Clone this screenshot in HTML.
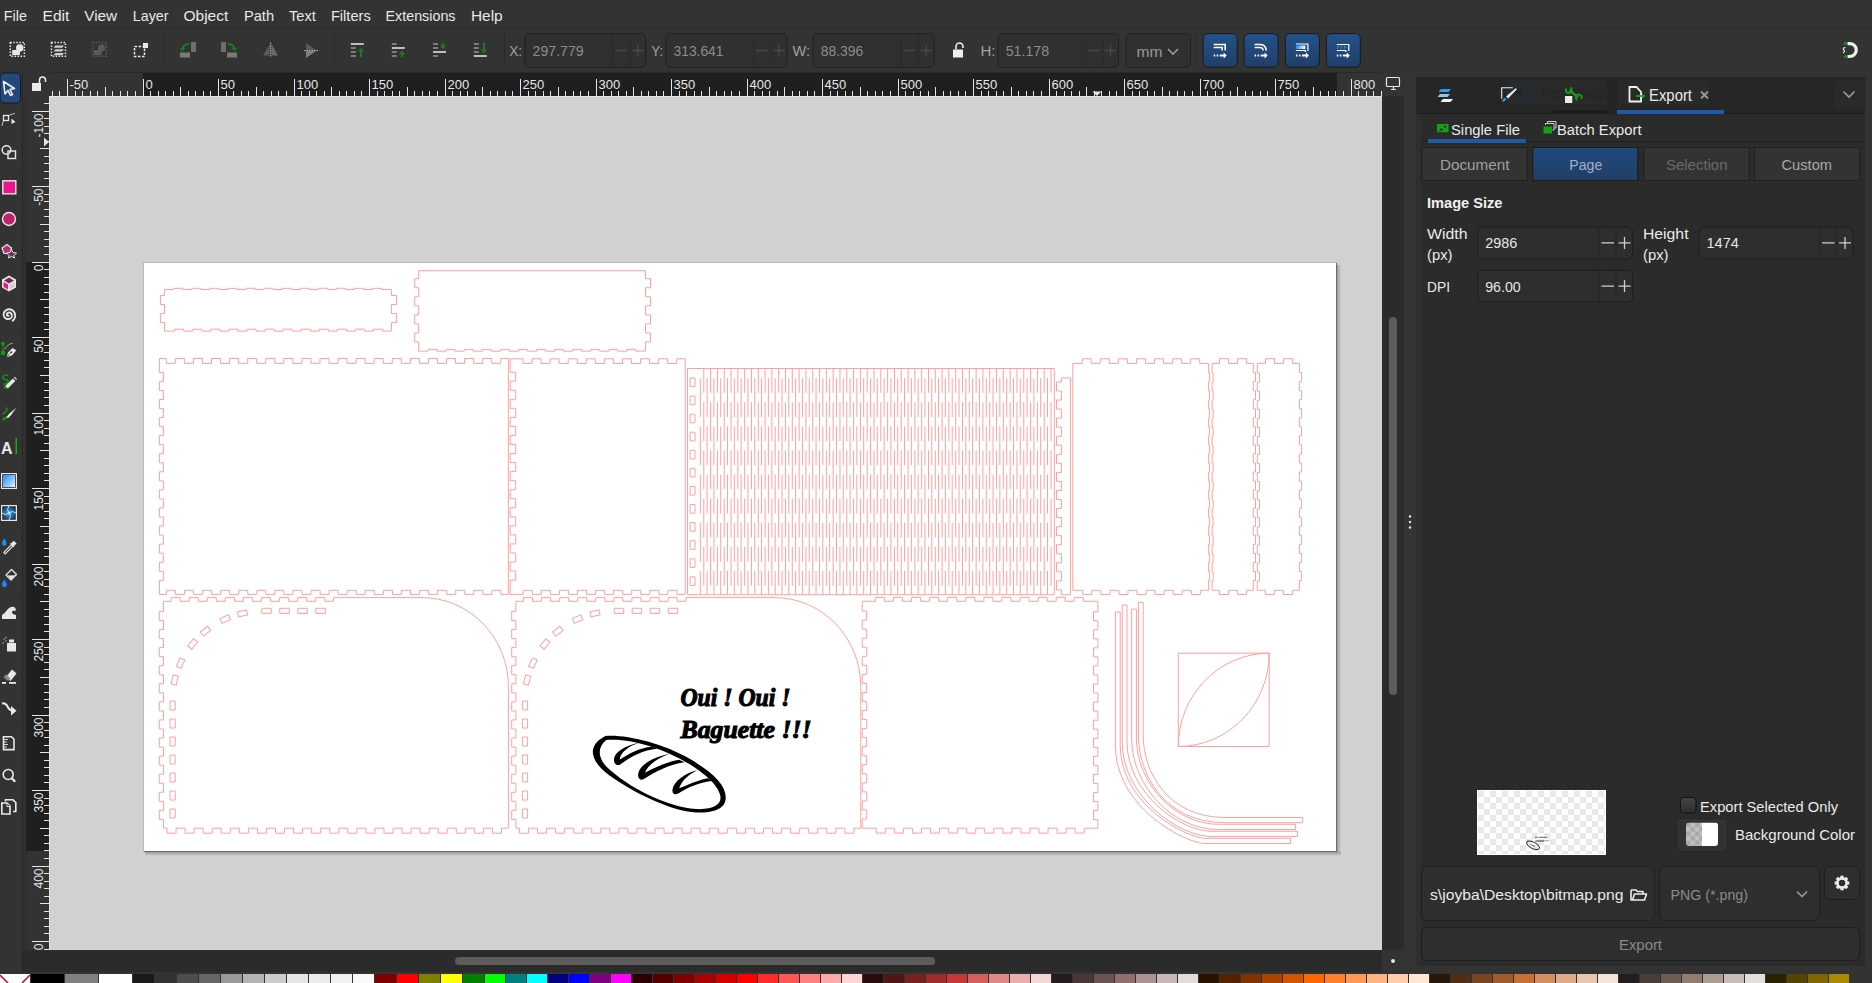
<!DOCTYPE html><html><head><meta charset="utf-8"><style>
html,body{margin:0;padding:0;width:1872px;height:983px;overflow:hidden;background:#333333;}
svg{display:block;font-family:"Liberation Sans", sans-serif;}
</style></head><body>
<svg width="1872" height="983" viewBox="0 0 1872 983">
<rect x="0" y="0" width="1872" height="983" fill="#333333" />
<rect x="0" y="28" width="1872" height="1" fill="#2c2c2c" />
<text x="3.7" y="21" font-size="15" fill="#e8e8e8" textLength="23.2" lengthAdjust="spacingAndGlyphs" >File</text>
<text x="42.5" y="21" font-size="15" fill="#e8e8e8" textLength="26.9" lengthAdjust="spacingAndGlyphs" >Edit</text>
<text x="84.2" y="21" font-size="15" fill="#e8e8e8" textLength="33" lengthAdjust="spacingAndGlyphs" >View</text>
<text x="132.8" y="21" font-size="15" fill="#e8e8e8" textLength="35.7" lengthAdjust="spacingAndGlyphs" >Layer</text>
<text x="183.5" y="21" font-size="15" fill="#e8e8e8" textLength="44.8" lengthAdjust="spacingAndGlyphs" >Object</text>
<text x="243.9" y="21" font-size="15" fill="#e8e8e8" textLength="30.2" lengthAdjust="spacingAndGlyphs" >Path</text>
<text x="288.9" y="21" font-size="15" fill="#e8e8e8" textLength="26.9" lengthAdjust="spacingAndGlyphs" >Text</text>
<text x="330.9" y="21" font-size="15" fill="#e8e8e8" textLength="39.9" lengthAdjust="spacingAndGlyphs" >Filters</text>
<text x="385.5" y="21" font-size="15" fill="#e8e8e8" textLength="70" lengthAdjust="spacingAndGlyphs" >Extensions</text>
<text x="470.9" y="21" font-size="15" fill="#e8e8e8" textLength="31.8" lengthAdjust="spacingAndGlyphs" >Help</text>
<rect x="22" y="72" width="1" height="900" fill="#262626" />
<rect x="50" y="72" width="1332" height="24" fill="#333333" />
<rect x="143" y="73" width="1194" height="23" fill="#1f1f1f" />
<rect x="25" y="96" width="24" height="854" fill="#333333" />
<rect x="26" y="262" width="23" height="589" fill="#1f1f1f" />
<rect x="50" y="72" width="1332" height="1" fill="#2a2a2a" />
<rect x="25" y="97" width="1" height="853" fill="#2a2a2a" />
<path d="M52.5 91V96 M59.5 91V96 M67.5 79V96 M75.5 91V96 M82.5 91V96 M90.5 91V96 M97.5 91V96 M105.5 87V96 M112.5 91V96 M120.5 91V96 M127.5 91V96 M135.5 91V96 M143.5 79V96 M150.5 91V96 M158.5 91V96 M165.5 91V96 M173.5 91V96 M180.5 87V96 M188.5 91V96 M195.5 91V96 M203.5 91V96 M210.5 91V96 M218.5 79V96 M226.5 91V96 M233.5 91V96 M241.5 91V96 M248.5 91V96 M256.5 87V96 M263.5 91V96 M271.5 91V96 M278.5 91V96 M286.5 91V96 M294.5 79V96 M301.5 91V96 M309.5 91V96 M316.5 91V96 M324.5 91V96 M331.5 87V96 M339.5 91V96 M346.5 91V96 M354.5 91V96 M361.5 91V96 M369.5 79V96 M377.5 91V96 M384.5 91V96 M392.5 91V96 M399.5 91V96 M407.5 87V96 M414.5 91V96 M422.5 91V96 M429.5 91V96 M437.5 91V96 M445.5 79V96 M452.5 91V96 M460.5 91V96 M467.5 91V96 M475.5 91V96 M482.5 87V96 M490.5 91V96 M497.5 91V96 M505.5 91V96 M512.5 91V96 M520.5 79V96 M528.5 91V96 M535.5 91V96 M543.5 91V96 M550.5 91V96 M558.5 87V96 M565.5 91V96 M573.5 91V96 M580.5 91V96 M588.5 91V96 M596.5 79V96 M603.5 91V96 M611.5 91V96 M618.5 91V96 M626.5 91V96 M633.5 87V96 M641.5 91V96 M648.5 91V96 M656.5 91V96 M663.5 91V96 M671.5 79V96 M679.5 91V96 M686.5 91V96 M694.5 91V96 M701.5 91V96 M709.5 87V96 M716.5 91V96 M724.5 91V96 M731.5 91V96 M739.5 91V96 M747.5 79V96 M754.5 91V96 M762.5 91V96 M769.5 91V96 M777.5 91V96 M784.5 87V96 M792.5 91V96 M799.5 91V96 M807.5 91V96 M814.5 91V96 M822.5 79V96 M830.5 91V96 M837.5 91V96 M845.5 91V96 M852.5 91V96 M860.5 87V96 M867.5 91V96 M875.5 91V96 M882.5 91V96 M890.5 91V96 M898.5 79V96 M905.5 91V96 M913.5 91V96 M920.5 91V96 M928.5 91V96 M935.5 87V96 M943.5 91V96 M950.5 91V96 M958.5 91V96 M965.5 91V96 M973.5 79V96 M981.5 91V96 M988.5 91V96 M996.5 91V96 M1003.5 91V96 M1011.5 87V96 M1018.5 91V96 M1026.5 91V96 M1033.5 91V96 M1041.5 91V96 M1049.5 79V96 M1056.5 91V96 M1064.5 91V96 M1071.5 91V96 M1079.5 91V96 M1086.5 87V96 M1094.5 91V96 M1101.5 91V96 M1109.5 91V96 M1116.5 91V96 M1124.5 79V96 M1132.5 91V96 M1139.5 91V96 M1147.5 91V96 M1154.5 91V96 M1162.5 87V96 M1169.5 91V96 M1177.5 91V96 M1184.5 91V96 M1192.5 91V96 M1200.5 79V96 M1207.5 91V96 M1215.5 91V96 M1222.5 91V96 M1230.5 91V96 M1237.5 87V96 M1245.5 91V96 M1252.5 91V96 M1260.5 91V96 M1267.5 91V96 M1275.5 79V96 M1283.5 91V96 M1290.5 91V96 M1298.5 91V96 M1305.5 91V96 M1313.5 87V96 M1320.5 91V96 M1328.5 91V96 M1335.5 91V96 M1343.5 91V96 M1351.5 79V96 M1358.5 91V96 M1366.5 91V96 M1373.5 91V96 M1381.5 91V96" stroke="#e6e6e6" stroke-width="1" fill="none"/>
<text x="69.5" y="89" font-size="13" fill="#e6e6e6" >-50</text>
<text x="145.5" y="89" font-size="13" fill="#e6e6e6" >0</text>
<text x="220.5" y="89" font-size="13" fill="#e6e6e6" >50</text>
<text x="296.5" y="89" font-size="13" fill="#e6e6e6" >100</text>
<text x="371.5" y="89" font-size="13" fill="#e6e6e6" >150</text>
<text x="447.5" y="89" font-size="13" fill="#e6e6e6" >200</text>
<text x="522.5" y="89" font-size="13" fill="#e6e6e6" >250</text>
<text x="598.5" y="89" font-size="13" fill="#e6e6e6" >300</text>
<text x="673.5" y="89" font-size="13" fill="#e6e6e6" >350</text>
<text x="749.5" y="89" font-size="13" fill="#e6e6e6" >400</text>
<text x="824.5" y="89" font-size="13" fill="#e6e6e6" >450</text>
<text x="900.5" y="89" font-size="13" fill="#e6e6e6" >500</text>
<text x="975.5" y="89" font-size="13" fill="#e6e6e6" >550</text>
<text x="1051.5" y="89" font-size="13" fill="#e6e6e6" >600</text>
<text x="1126.5" y="89" font-size="13" fill="#e6e6e6" >650</text>
<text x="1202.5" y="89" font-size="13" fill="#e6e6e6" >700</text>
<text x="1277.5" y="89" font-size="13" fill="#e6e6e6" >750</text>
<text x="1353.5" y="89" font-size="13" fill="#e6e6e6" >800</text>
<path d="M44 103.5H49 M32 111.5H49 M44 118.5H49 M44 126.5H49 M44 133.5H49 M44 141.5H49 M40 148.5H49 M44 156.5H49 M44 163.5H49 M44 171.5H49 M44 178.5H49 M32 186.5H49 M44 194.5H49 M44 201.5H49 M44 209.5H49 M44 216.5H49 M40 224.5H49 M44 231.5H49 M44 239.5H49 M44 246.5H49 M44 254.5H49 M32 262.5H49 M44 269.5H49 M44 277.5H49 M44 284.5H49 M44 292.5H49 M40 299.5H49 M44 307.5H49 M44 314.5H49 M44 322.5H49 M44 329.5H49 M32 337.5H49 M44 345.5H49 M44 352.5H49 M44 360.5H49 M44 367.5H49 M40 375.5H49 M44 382.5H49 M44 390.5H49 M44 397.5H49 M44 405.5H49 M32 413.5H49 M44 420.5H49 M44 428.5H49 M44 435.5H49 M44 443.5H49 M40 450.5H49 M44 458.5H49 M44 465.5H49 M44 473.5H49 M44 480.5H49 M32 488.5H49 M44 496.5H49 M44 503.5H49 M44 511.5H49 M44 518.5H49 M40 526.5H49 M44 533.5H49 M44 541.5H49 M44 548.5H49 M44 556.5H49 M32 564.5H49 M44 571.5H49 M44 579.5H49 M44 586.5H49 M44 594.5H49 M40 601.5H49 M44 609.5H49 M44 616.5H49 M44 624.5H49 M44 631.5H49 M32 639.5H49 M44 647.5H49 M44 654.5H49 M44 662.5H49 M44 669.5H49 M40 677.5H49 M44 684.5H49 M44 692.5H49 M44 699.5H49 M44 707.5H49 M32 715.5H49 M44 722.5H49 M44 730.5H49 M44 737.5H49 M44 745.5H49 M40 752.5H49 M44 760.5H49 M44 767.5H49 M44 775.5H49 M44 782.5H49 M32 790.5H49 M44 798.5H49 M44 805.5H49 M44 813.5H49 M44 820.5H49 M40 828.5H49 M44 835.5H49 M44 843.5H49 M44 850.5H49 M44 858.5H49 M32 866.5H49 M44 873.5H49 M44 881.5H49 M44 888.5H49 M44 896.5H49 M40 903.5H49 M44 911.5H49 M44 918.5H49 M44 926.5H49 M44 933.5H49 M32 941.5H49 M44 949.5H49" stroke="#e6e6e6" stroke-width="1" fill="none"/>
<text x="0" y="0" font-size="12" fill="#e6e6e6" text-anchor="end" transform="translate(42.5 113.5) rotate(-90)">-100</text>
<text x="0" y="0" font-size="12" fill="#e6e6e6" text-anchor="end" transform="translate(42.5 188.5) rotate(-90)">-50</text>
<text x="0" y="0" font-size="12" fill="#e6e6e6" text-anchor="end" transform="translate(42.5 264.5) rotate(-90)">0</text>
<text x="0" y="0" font-size="12" fill="#e6e6e6" text-anchor="end" transform="translate(42.5 339.5) rotate(-90)">50</text>
<text x="0" y="0" font-size="12" fill="#e6e6e6" text-anchor="end" transform="translate(42.5 415.5) rotate(-90)">100</text>
<text x="0" y="0" font-size="12" fill="#e6e6e6" text-anchor="end" transform="translate(42.5 490.5) rotate(-90)">150</text>
<text x="0" y="0" font-size="12" fill="#e6e6e6" text-anchor="end" transform="translate(42.5 566.5) rotate(-90)">200</text>
<text x="0" y="0" font-size="12" fill="#e6e6e6" text-anchor="end" transform="translate(42.5 641.5) rotate(-90)">250</text>
<text x="0" y="0" font-size="12" fill="#e6e6e6" text-anchor="end" transform="translate(42.5 717.5) rotate(-90)">300</text>
<text x="0" y="0" font-size="12" fill="#e6e6e6" text-anchor="end" transform="translate(42.5 792.5) rotate(-90)">350</text>
<text x="0" y="0" font-size="12" fill="#e6e6e6" text-anchor="end" transform="translate(42.5 868.5) rotate(-90)">400</text>
<text x="0" y="0" font-size="12" fill="#e6e6e6" text-anchor="end" transform="translate(42.5 943.5) rotate(-90)">450</text>
<path d="M1092.5 91.5L1101.5 91.5L1097 96Z" fill="#e6e6e6"/>
<path d="M44 137.5L49 142L44 146.5Z" fill="#e6e6e6"/>
<rect x="50" y="96" width="1332" height="1" fill="#e6e6e6" />
<rect x="49" y="96" width="1" height="854" fill="#e6e6e6" />
<rect x="50" y="97" width="1332" height="853" fill="#d1d1d1" />
<defs><linearGradient id="shR" x1="0" x2="1"><stop offset="0" stop-color="#9a9a9a"/><stop offset="1" stop-color="#d1d1d1"/></linearGradient><linearGradient id="shB" x1="0" y1="0" x2="0" y2="1"><stop offset="0" stop-color="#9a9a9a"/><stop offset="1" stop-color="#d1d1d1"/></linearGradient></defs>
<rect x="1337" y="265" width="4" height="590" fill="url(#shR)" />
<rect x="145" y="852" width="1196" height="4" fill="url(#shB)" />
<rect x="143" y="262" width="1194" height="590" fill="#b8b8b8" />
<rect x="144" y="263" width="1193" height="589" fill="#6a6a6a" />
<rect x="144" y="263" width="1192" height="588" fill="#ffffff" />
<g fill="none" stroke="#ffa0a0" stroke-width="1">
<path d="M164.50 289.50 L173.70 289.50 L173.70 288.30 L182.74 288.30 L182.74 289.50 L191.78 289.50 L191.78 288.30 L200.82 288.30 L200.82 289.50 L209.86 289.50 L209.86 288.30 L218.90 288.30 L218.90 289.50 L227.94 289.50 L227.94 288.30 L236.98 288.30 L236.98 289.50 L246.02 289.50 L246.02 288.30 L255.06 288.30 L255.06 289.50 L264.10 289.50 L264.10 288.30 L273.14 288.30 L273.14 289.50 L282.18 289.50 L282.18 288.30 L291.22 288.30 L291.22 289.50 L300.26 289.50 L300.26 288.30 L309.30 288.30 L309.30 289.50 L318.34 289.50 L318.34 288.30 L327.38 288.30 L327.38 289.50 L336.42 289.50 L336.42 288.30 L345.46 288.30 L345.46 289.50 L354.50 289.50 L354.50 288.30 L363.54 288.30 L363.54 289.50 L372.58 289.50 L372.58 288.30 L381.62 288.30 L381.62 289.50 L391.40 289.50 L391.40 295.50 L396.50 295.50 L396.50 304.54 L391.40 304.54 L391.40 313.58 L396.50 313.58 L396.50 322.62 L391.40 322.62 L391.40 331.10 L382.60 331.10 L382.60 329.20 L373.56 329.20 L373.56 331.10 L364.52 331.10 L364.52 329.20 L355.48 329.20 L355.48 331.10 L346.44 331.10 L346.44 329.20 L337.40 329.20 L337.40 331.10 L328.36 331.10 L328.36 329.20 L319.32 329.20 L319.32 331.10 L310.28 331.10 L310.28 329.20 L301.24 329.20 L301.24 331.10 L292.20 331.10 L292.20 329.20 L283.16 329.20 L283.16 331.10 L274.12 331.10 L274.12 329.20 L265.08 329.20 L265.08 331.10 L256.04 331.10 L256.04 329.20 L247.00 329.20 L247.00 331.10 L237.96 331.10 L237.96 329.20 L228.92 329.20 L228.92 331.10 L219.88 331.10 L219.88 329.20 L210.84 329.20 L210.84 331.10 L201.80 331.10 L201.80 329.20 L192.76 329.20 L192.76 331.10 L183.72 331.10 L183.72 329.20 L174.68 329.20 L174.68 331.10 L164.50 331.10 L164.50 322.60 L160.40 322.60 L160.40 313.56 L164.50 313.56 L164.50 304.52 L160.40 304.52 L160.40 295.48 L164.50 295.48 L164.50 289.50Z"/>
<path d="M418.70 270.70 L645.50 270.70 L645.50 278.70 L650.50 278.70 L650.50 287.74 L645.50 287.74 L645.50 296.78 L650.50 296.78 L650.50 305.82 L645.50 305.82 L645.50 314.86 L650.50 314.86 L650.50 323.90 L645.50 323.90 L645.50 332.94 L650.50 332.94 L650.50 341.98 L645.50 341.98 L645.50 351.20 L635.90 351.20 L635.90 349.60 L626.86 349.60 L626.86 351.20 L617.82 351.20 L617.82 349.60 L608.78 349.60 L608.78 351.20 L599.74 351.20 L599.74 349.60 L590.70 349.60 L590.70 351.20 L581.66 351.20 L581.66 349.60 L572.62 349.60 L572.62 351.20 L563.58 351.20 L563.58 349.60 L554.54 349.60 L554.54 351.20 L545.50 351.20 L545.50 349.60 L536.46 349.60 L536.46 351.20 L527.42 351.20 L527.42 349.60 L518.38 349.60 L518.38 351.20 L509.34 351.20 L509.34 349.60 L500.30 349.60 L500.30 351.20 L491.26 351.20 L491.26 349.60 L482.22 349.60 L482.22 351.20 L473.18 351.20 L473.18 349.60 L464.14 349.60 L464.14 351.20 L455.10 351.20 L455.10 349.60 L446.06 349.60 L446.06 351.20 L437.02 351.20 L437.02 349.60 L427.98 349.60 L427.98 351.20 L418.70 351.20 L418.70 342.00 L414.70 342.00 L414.70 332.96 L418.70 332.96 L418.70 323.92 L414.70 323.92 L414.70 314.88 L418.70 314.88 L418.70 305.84 L414.70 305.84 L414.70 296.80 L418.70 296.80 L418.70 287.76 L414.70 287.76 L414.70 278.72 L418.70 278.72 L418.70 270.70Z"/>
<path d="M159.40 358.50 L166.30 358.50 L166.30 363.40 L175.34 363.40 L175.34 358.50 L184.38 358.50 L184.38 363.40 L193.42 363.40 L193.42 358.50 L202.46 358.50 L202.46 363.40 L211.50 363.40 L211.50 358.50 L220.54 358.50 L220.54 363.40 L229.58 363.40 L229.58 358.50 L238.62 358.50 L238.62 363.40 L247.66 363.40 L247.66 358.50 L256.70 358.50 L256.70 363.40 L265.74 363.40 L265.74 358.50 L274.78 358.50 L274.78 363.40 L283.82 363.40 L283.82 358.50 L292.86 358.50 L292.86 363.40 L301.90 363.40 L301.90 358.50 L310.94 358.50 L310.94 363.40 L319.98 363.40 L319.98 358.50 L329.02 358.50 L329.02 363.40 L338.06 363.40 L338.06 358.50 L347.10 358.50 L347.10 363.40 L356.14 363.40 L356.14 358.50 L365.18 358.50 L365.18 363.40 L374.22 363.40 L374.22 358.50 L383.26 358.50 L383.26 363.40 L392.30 363.40 L392.30 358.50 L401.34 358.50 L401.34 363.40 L410.38 363.40 L410.38 358.50 L419.42 358.50 L419.42 363.40 L428.46 363.40 L428.46 358.50 L437.50 358.50 L437.50 363.40 L446.54 363.40 L446.54 358.50 L455.58 358.50 L455.58 363.40 L464.62 363.40 L464.62 358.50 L473.66 358.50 L473.66 363.40 L482.70 363.40 L482.70 358.50 L491.74 358.50 L491.74 363.40 L500.78 363.40 L500.78 358.50 L508.40 358.50 L508.40 594.40 L500.90 594.40 L500.90 590.30 L491.86 590.30 L491.86 594.40 L482.82 594.40 L482.82 590.30 L473.78 590.30 L473.78 594.40 L464.74 594.40 L464.74 590.30 L455.70 590.30 L455.70 594.40 L446.66 594.40 L446.66 590.30 L437.62 590.30 L437.62 594.40 L428.58 594.40 L428.58 590.30 L419.54 590.30 L419.54 594.40 L410.50 594.40 L410.50 590.30 L401.46 590.30 L401.46 594.40 L392.42 594.40 L392.42 590.30 L383.38 590.30 L383.38 594.40 L374.34 594.40 L374.34 590.30 L365.30 590.30 L365.30 594.40 L356.26 594.40 L356.26 590.30 L347.22 590.30 L347.22 594.40 L338.18 594.40 L338.18 590.30 L329.14 590.30 L329.14 594.40 L320.10 594.40 L320.10 590.30 L311.06 590.30 L311.06 594.40 L302.02 594.40 L302.02 590.30 L292.98 590.30 L292.98 594.40 L283.94 594.40 L283.94 590.30 L274.90 590.30 L274.90 594.40 L265.86 594.40 L265.86 590.30 L256.82 590.30 L256.82 594.40 L247.78 594.40 L247.78 590.30 L238.74 590.30 L238.74 594.40 L229.70 594.40 L229.70 590.30 L220.66 590.30 L220.66 594.40 L211.62 594.40 L211.62 590.30 L202.58 590.30 L202.58 594.40 L193.54 594.40 L193.54 590.30 L184.50 590.30 L184.50 594.40 L175.46 594.40 L175.46 590.30 L166.42 590.30 L166.42 594.40 L159.40 594.40 L159.40 580.30 L163.40 580.30 L163.40 571.26 L159.40 571.26 L159.40 562.22 L163.40 562.22 L163.40 553.18 L159.40 553.18 L159.40 544.14 L163.40 544.14 L163.40 535.10 L159.40 535.10 L159.40 526.06 L163.40 526.06 L163.40 517.02 L159.40 517.02 L159.40 507.98 L163.40 507.98 L163.40 498.94 L159.40 498.94 L159.40 489.90 L163.40 489.90 L163.40 480.86 L159.40 480.86 L159.40 471.82 L163.40 471.82 L163.40 462.78 L159.40 462.78 L159.40 453.74 L163.40 453.74 L163.40 444.70 L159.40 444.70 L159.40 435.66 L163.40 435.66 L163.40 426.62 L159.40 426.62 L159.40 417.58 L163.40 417.58 L163.40 408.54 L159.40 408.54 L159.40 399.50 L163.40 399.50 L163.40 390.46 L159.40 390.46 L159.40 381.42 L163.40 381.42 L163.40 372.38 L159.40 372.38 L159.40 358.50Z"/>
<path d="M510.20 358.80 L523.00 358.80 L523.00 363.50 L532.04 363.50 L532.04 358.80 L541.08 358.80 L541.08 363.50 L550.12 363.50 L550.12 358.80 L559.16 358.80 L559.16 363.50 L568.20 363.50 L568.20 358.80 L577.24 358.80 L577.24 363.50 L586.28 363.50 L586.28 358.80 L595.32 358.80 L595.32 363.50 L604.36 363.50 L604.36 358.80 L613.40 358.80 L613.40 363.50 L622.44 363.50 L622.44 358.80 L631.48 358.80 L631.48 363.50 L640.52 363.50 L640.52 358.80 L649.56 358.80 L649.56 363.50 L658.60 363.50 L658.60 358.80 L667.64 358.80 L667.64 363.50 L676.68 363.50 L676.68 358.80 L685.20 358.80 L685.20 594.40 L676.90 594.40 L676.90 590.30 L667.86 590.30 L667.86 594.40 L658.82 594.40 L658.82 590.30 L649.78 590.30 L649.78 594.40 L640.74 594.40 L640.74 590.30 L631.70 590.30 L631.70 594.40 L622.66 594.40 L622.66 590.30 L613.62 590.30 L613.62 594.40 L604.58 594.40 L604.58 590.30 L595.54 590.30 L595.54 594.40 L586.50 594.40 L586.50 590.30 L577.46 590.30 L577.46 594.40 L568.42 594.40 L568.42 590.30 L559.38 590.30 L559.38 594.40 L550.34 594.40 L550.34 590.30 L541.30 590.30 L541.30 594.40 L532.26 594.40 L532.26 590.30 L523.22 590.30 L523.22 594.40 L510.20 594.40 L510.20 580.10 L515.70 580.10 L515.70 571.06 L510.20 571.06 L510.20 562.02 L515.70 562.02 L515.70 552.98 L510.20 552.98 L510.20 543.94 L515.70 543.94 L515.70 534.90 L510.20 534.90 L510.20 525.86 L515.70 525.86 L515.70 516.82 L510.20 516.82 L510.20 507.78 L515.70 507.78 L515.70 498.74 L510.20 498.74 L510.20 489.70 L515.70 489.70 L515.70 480.66 L510.20 480.66 L510.20 471.62 L515.70 471.62 L515.70 462.58 L510.20 462.58 L510.20 453.54 L515.70 453.54 L515.70 444.50 L510.20 444.50 L510.20 435.46 L515.70 435.46 L515.70 426.42 L510.20 426.42 L510.20 417.38 L515.70 417.38 L515.70 408.34 L510.20 408.34 L510.20 399.30 L515.70 399.30 L515.70 390.26 L510.20 390.26 L510.20 381.22 L515.70 381.22 L515.70 372.18 L510.20 372.18 L510.20 358.80Z"/>
<path d="M687.5 368.5H1054.3V594.7H687.5Z"/>
<path d="M690.1 378.00h4.9v8.6h-4.9Z"/>
<path d="M690.1 396.08h4.9v8.6h-4.9Z"/>
<path d="M690.1 414.16h4.9v8.6h-4.9Z"/>
<path d="M690.1 432.24h4.9v8.6h-4.9Z"/>
<path d="M690.1 450.32h4.9v8.6h-4.9Z"/>
<path d="M690.1 468.40h4.9v8.6h-4.9Z"/>
<path d="M690.1 486.48h4.9v8.6h-4.9Z"/>
<path d="M690.1 504.56h4.9v8.6h-4.9Z"/>
<path d="M690.1 522.64h4.9v8.6h-4.9Z"/>
<path d="M690.1 540.72h4.9v8.6h-4.9Z"/>
<path d="M690.1 558.80h4.9v8.6h-4.9Z"/>
<path d="M690.1 576.88h4.9v8.6h-4.9Z"/>
<path d="M1061.40 377.90 L1070.40 377.90 L1070.40 594.70 L1061.40 594.70 L1061.40 589.90 L1056.50 589.90 L1056.50 580.86 L1061.40 580.86 L1061.40 571.82 L1056.50 571.82 L1056.50 562.78 L1061.40 562.78 L1061.40 553.74 L1056.50 553.74 L1056.50 544.70 L1061.40 544.70 L1061.40 535.66 L1056.50 535.66 L1056.50 526.62 L1061.40 526.62 L1061.40 517.58 L1056.50 517.58 L1056.50 508.54 L1061.40 508.54 L1061.40 499.50 L1056.50 499.50 L1056.50 490.46 L1061.40 490.46 L1061.40 481.42 L1056.50 481.42 L1056.50 472.38 L1061.40 472.38 L1061.40 463.34 L1056.50 463.34 L1056.50 454.30 L1061.40 454.30 L1061.40 445.26 L1056.50 445.26 L1056.50 436.22 L1061.40 436.22 L1061.40 427.18 L1056.50 427.18 L1056.50 418.14 L1061.40 418.14 L1061.40 409.10 L1056.50 409.10 L1056.50 400.06 L1061.40 400.06 L1061.40 391.02 L1056.50 391.02 L1056.50 381.98 L1061.40 381.98 L1061.40 377.90Z"/>
<path d="M1072.80 363.40 L1082.20 363.40 L1082.20 358.80 L1091.24 358.80 L1091.24 363.40 L1100.28 363.40 L1100.28 358.80 L1109.32 358.80 L1109.32 363.40 L1118.36 363.40 L1118.36 358.80 L1127.40 358.80 L1127.40 363.40 L1136.44 363.40 L1136.44 358.80 L1145.48 358.80 L1145.48 363.40 L1154.52 363.40 L1154.52 358.80 L1163.56 358.80 L1163.56 363.40 L1172.60 363.40 L1172.60 358.80 L1181.64 358.80 L1181.64 363.40 L1190.68 363.40 L1190.68 358.80 L1199.72 358.80 L1199.72 363.40 L1208.60 363.40 L1208.60 372.60 L1209.60 372.60 L1209.60 381.64 L1208.60 381.64 L1208.60 390.68 L1209.60 390.68 L1209.60 399.72 L1208.60 399.72 L1208.60 408.76 L1209.60 408.76 L1209.60 417.80 L1208.60 417.80 L1208.60 426.84 L1209.60 426.84 L1209.60 435.88 L1208.60 435.88 L1208.60 444.92 L1209.60 444.92 L1209.60 453.96 L1208.60 453.96 L1208.60 463.00 L1209.60 463.00 L1209.60 472.04 L1208.60 472.04 L1208.60 481.08 L1209.60 481.08 L1209.60 490.12 L1208.60 490.12 L1208.60 499.16 L1209.60 499.16 L1209.60 508.20 L1208.60 508.20 L1208.60 517.24 L1209.60 517.24 L1209.60 526.28 L1208.60 526.28 L1208.60 535.32 L1209.60 535.32 L1209.60 544.36 L1208.60 544.36 L1208.60 553.40 L1209.60 553.40 L1209.60 562.44 L1208.60 562.44 L1208.60 571.48 L1209.60 571.48 L1209.60 580.52 L1208.60 580.52 L1208.60 590.30 L1200.30 590.30 L1200.30 594.50 L1191.26 594.50 L1191.26 590.30 L1182.22 590.30 L1182.22 594.50 L1173.18 594.50 L1173.18 590.30 L1164.14 590.30 L1164.14 594.50 L1155.10 594.50 L1155.10 590.30 L1146.06 590.30 L1146.06 594.50 L1137.02 594.50 L1137.02 590.30 L1127.98 590.30 L1127.98 594.50 L1118.94 594.50 L1118.94 590.30 L1109.90 590.30 L1109.90 594.50 L1100.86 594.50 L1100.86 590.30 L1091.82 590.30 L1091.82 594.50 L1082.78 594.50 L1082.78 590.30 L1072.80 590.30 L1072.80 363.40Z"/>
<path d="M1212.10 363.40 L1219.50 363.40 L1219.50 358.70 L1228.54 358.70 L1228.54 363.40 L1237.58 363.40 L1237.58 358.70 L1246.62 358.70 L1246.62 363.40 L1253.30 363.40 L1253.30 372.60 L1255.50 372.60 L1255.50 381.64 L1253.30 381.64 L1253.30 390.68 L1255.50 390.68 L1255.50 399.72 L1253.30 399.72 L1253.30 408.76 L1255.50 408.76 L1255.50 417.80 L1253.30 417.80 L1253.30 426.84 L1255.50 426.84 L1255.50 435.88 L1253.30 435.88 L1253.30 444.92 L1255.50 444.92 L1255.50 453.96 L1253.30 453.96 L1253.30 463.00 L1255.50 463.00 L1255.50 472.04 L1253.30 472.04 L1253.30 481.08 L1255.50 481.08 L1255.50 490.12 L1253.30 490.12 L1253.30 499.16 L1255.50 499.16 L1255.50 508.20 L1253.30 508.20 L1253.30 517.24 L1255.50 517.24 L1255.50 526.28 L1253.30 526.28 L1253.30 535.32 L1255.50 535.32 L1255.50 544.36 L1253.30 544.36 L1253.30 553.40 L1255.50 553.40 L1255.50 562.44 L1253.30 562.44 L1253.30 571.48 L1255.50 571.48 L1255.50 580.52 L1253.30 580.52 L1253.30 590.30 L1246.60 590.30 L1246.60 594.50 L1237.56 594.50 L1237.56 590.30 L1228.52 590.30 L1228.52 594.50 L1219.48 594.50 L1219.48 590.30 L1212.10 590.30 L1212.10 581.10 L1213.10 581.10 L1213.10 572.06 L1212.10 572.06 L1212.10 563.02 L1213.10 563.02 L1213.10 553.98 L1212.10 553.98 L1212.10 544.94 L1213.10 544.94 L1213.10 535.90 L1212.10 535.90 L1212.10 526.86 L1213.10 526.86 L1213.10 517.82 L1212.10 517.82 L1212.10 508.78 L1213.10 508.78 L1213.10 499.74 L1212.10 499.74 L1212.10 490.70 L1213.10 490.70 L1213.10 481.66 L1212.10 481.66 L1212.10 472.62 L1213.10 472.62 L1213.10 463.58 L1212.10 463.58 L1212.10 454.54 L1213.10 454.54 L1213.10 445.50 L1212.10 445.50 L1212.10 436.46 L1213.10 436.46 L1213.10 427.42 L1212.10 427.42 L1212.10 418.38 L1213.10 418.38 L1213.10 409.34 L1212.10 409.34 L1212.10 400.30 L1213.10 400.30 L1213.10 391.26 L1212.10 391.26 L1212.10 382.22 L1213.10 382.22 L1213.10 373.18 L1212.10 373.18 L1212.10 363.40Z"/>
<path d="M1257.30 363.40 L1265.50 363.40 L1265.50 358.70 L1274.54 358.70 L1274.54 363.40 L1283.58 363.40 L1283.58 358.70 L1292.62 358.70 L1292.62 363.40 L1299.40 363.40 L1299.40 372.60 L1301.60 372.60 L1301.60 381.64 L1299.40 381.64 L1299.40 390.68 L1301.60 390.68 L1301.60 399.72 L1299.40 399.72 L1299.40 408.76 L1301.60 408.76 L1301.60 417.80 L1299.40 417.80 L1299.40 426.84 L1301.60 426.84 L1301.60 435.88 L1299.40 435.88 L1299.40 444.92 L1301.60 444.92 L1301.60 453.96 L1299.40 453.96 L1299.40 463.00 L1301.60 463.00 L1301.60 472.04 L1299.40 472.04 L1299.40 481.08 L1301.60 481.08 L1301.60 490.12 L1299.40 490.12 L1299.40 499.16 L1301.60 499.16 L1301.60 508.20 L1299.40 508.20 L1299.40 517.24 L1301.60 517.24 L1301.60 526.28 L1299.40 526.28 L1299.40 535.32 L1301.60 535.32 L1301.60 544.36 L1299.40 544.36 L1299.40 553.40 L1301.60 553.40 L1301.60 562.44 L1299.40 562.44 L1299.40 571.48 L1301.60 571.48 L1301.60 580.52 L1299.40 580.52 L1299.40 590.30 L1292.40 590.30 L1292.40 594.50 L1283.36 594.50 L1283.36 590.30 L1274.32 590.30 L1274.32 594.50 L1265.28 594.50 L1265.28 590.30 L1257.30 590.30 L1257.30 581.10 L1259.50 581.10 L1259.50 572.06 L1257.30 572.06 L1257.30 563.02 L1259.50 563.02 L1259.50 553.98 L1257.30 553.98 L1257.30 544.94 L1259.50 544.94 L1259.50 535.90 L1257.30 535.90 L1257.30 526.86 L1259.50 526.86 L1259.50 517.82 L1257.30 517.82 L1257.30 508.78 L1259.50 508.78 L1259.50 499.74 L1257.30 499.74 L1257.30 490.70 L1259.50 490.70 L1259.50 481.66 L1257.30 481.66 L1257.30 472.62 L1259.50 472.62 L1259.50 463.58 L1257.30 463.58 L1257.30 454.54 L1259.50 454.54 L1259.50 445.50 L1257.30 445.50 L1257.30 436.46 L1259.50 436.46 L1259.50 427.42 L1257.30 427.42 L1257.30 418.38 L1259.50 418.38 L1259.50 409.34 L1257.30 409.34 L1257.30 400.30 L1259.50 400.30 L1259.50 391.26 L1257.30 391.26 L1257.30 382.22 L1259.50 382.22 L1259.50 373.18 L1257.30 373.18 L1257.30 363.40Z"/>
<path d="M163.50 601.30 L171.10 601.30 L171.10 597.60 L180.14 597.60 L180.14 601.30 L189.18 601.30 L189.18 597.60 L198.22 597.60 L198.22 601.30 L207.26 601.30 L207.26 597.60 L216.30 597.60 L216.30 601.30 L225.34 601.30 L225.34 597.60 L234.38 597.60 L234.38 601.30 L243.42 601.30 L243.42 597.60 L252.46 597.60 L252.46 601.30 L261.50 601.30 L261.50 597.60 L270.54 597.60 L270.54 601.30 L279.58 601.30 L279.58 597.60 L288.62 597.60 L288.62 601.30 L297.66 601.30 L297.66 597.60 L306.70 597.60 L306.70 601.30 L315.74 601.30 L315.74 597.60 L324.78 597.60 L324.78 601.30 L333.50 601.30 L333.5 597.6 L422 597.6 A86.4 89 0 0 1 508.4 686.6 L508.4 828.2 L508.40 828.20 L501.50 828.20 L501.50 833.20 L492.46 833.20 L492.46 828.20 L483.42 828.20 L483.42 833.20 L474.38 833.20 L474.38 828.20 L465.34 828.20 L465.34 833.20 L456.30 833.20 L456.30 828.20 L447.26 828.20 L447.26 833.20 L438.22 833.20 L438.22 828.20 L429.18 828.20 L429.18 833.20 L420.14 833.20 L420.14 828.20 L411.10 828.20 L411.10 833.20 L402.06 833.20 L402.06 828.20 L393.02 828.20 L393.02 833.20 L383.98 833.20 L383.98 828.20 L374.94 828.20 L374.94 833.20 L365.90 833.20 L365.90 828.20 L356.86 828.20 L356.86 833.20 L347.82 833.20 L347.82 828.20 L338.78 828.20 L338.78 833.20 L329.74 833.20 L329.74 828.20 L320.70 828.20 L320.70 833.20 L311.66 833.20 L311.66 828.20 L302.62 828.20 L302.62 833.20 L293.58 833.20 L293.58 828.20 L284.54 828.20 L284.54 833.20 L275.50 833.20 L275.50 828.20 L266.46 828.20 L266.46 833.20 L257.42 833.20 L257.42 828.20 L248.38 828.20 L248.38 833.20 L239.34 833.20 L239.34 828.20 L230.30 828.20 L230.30 833.20 L221.26 833.20 L221.26 828.20 L212.22 828.20 L212.22 833.20 L203.18 833.20 L203.18 828.20 L194.14 828.20 L194.14 833.20 L185.10 833.20 L185.10 828.20 L176.06 828.20 L176.06 833.20 L167.02 833.20 L167.02 828.20 L163.50 828.20 L163.50 819.40 L159.30 819.40 L159.30 810.36 L163.50 810.36 L163.50 801.32 L159.30 801.32 L159.30 792.28 L163.50 792.28 L163.50 783.24 L159.30 783.24 L159.30 774.20 L163.50 774.20 L163.50 765.16 L159.30 765.16 L159.30 756.12 L163.50 756.12 L163.50 747.08 L159.30 747.08 L159.30 738.04 L163.50 738.04 L163.50 729.00 L159.30 729.00 L159.30 719.96 L163.50 719.96 L163.50 710.92 L159.30 710.92 L159.30 701.88 L163.50 701.88 L163.50 692.84 L159.30 692.84 L159.30 683.80 L163.50 683.80 L163.50 674.76 L159.30 674.76 L159.30 665.72 L163.50 665.72 L163.50 656.68 L159.30 656.68 L159.30 647.64 L163.50 647.64 L163.50 638.60 L159.30 638.60 L159.30 629.56 L163.50 629.56 L163.50 620.52 L159.30 620.52 L159.30 611.48 L163.50 611.48 L163.50 601.30Z"/>
<path d="M170 701.00h5.2v9h-5.2Z"/>
<path d="M170 719.00h5.2v9h-5.2Z"/>
<path d="M170 737.00h5.2v9h-5.2Z"/>
<path d="M170 755.00h5.2v9h-5.2Z"/>
<path d="M170 773.00h5.2v9h-5.2Z"/>
<path d="M170 791.00h5.2v9h-5.2Z"/>
<path d="M170 809.00h5.2v9h-5.2Z"/>
<path d="M261.80 608.3h9.5v5.1h-9.5Z"/>
<path d="M279.80 608.3h9.5v5.1h-9.5Z"/>
<path d="M297.80 608.3h9.5v5.1h-9.5Z"/>
<path d="M315.80 608.3h9.5v5.1h-9.5Z"/>
<path d="M515.90 601.30 L523.50 601.30 L523.50 597.60 L532.54 597.60 L532.54 601.30 L541.58 601.30 L541.58 597.60 L550.62 597.60 L550.62 601.30 L559.66 601.30 L559.66 597.60 L568.70 597.60 L568.70 601.30 L577.74 601.30 L577.74 597.60 L586.78 597.60 L586.78 601.30 L595.82 601.30 L595.82 597.60 L604.86 597.60 L604.86 601.30 L613.90 601.30 L613.90 597.60 L622.94 597.60 L622.94 601.30 L631.98 601.30 L631.98 597.60 L641.02 597.60 L641.02 601.30 L650.06 601.30 L650.06 597.60 L659.10 597.60 L659.10 601.30 L668.14 601.30 L668.14 597.60 L677.18 597.60 L677.18 601.30 L685.90 601.30 L685.9 597.6 L774.4 597.6 A86.4 89 0 0 1 860.8 686.6 L860.8 828.2 L860.80 828.20 L853.90 828.20 L853.90 833.20 L844.86 833.20 L844.86 828.20 L835.82 828.20 L835.82 833.20 L826.78 833.20 L826.78 828.20 L817.74 828.20 L817.74 833.20 L808.70 833.20 L808.70 828.20 L799.66 828.20 L799.66 833.20 L790.62 833.20 L790.62 828.20 L781.58 828.20 L781.58 833.20 L772.54 833.20 L772.54 828.20 L763.50 828.20 L763.50 833.20 L754.46 833.20 L754.46 828.20 L745.42 828.20 L745.42 833.20 L736.38 833.20 L736.38 828.20 L727.34 828.20 L727.34 833.20 L718.30 833.20 L718.30 828.20 L709.26 828.20 L709.26 833.20 L700.22 833.20 L700.22 828.20 L691.18 828.20 L691.18 833.20 L682.14 833.20 L682.14 828.20 L673.10 828.20 L673.10 833.20 L664.06 833.20 L664.06 828.20 L655.02 828.20 L655.02 833.20 L645.98 833.20 L645.98 828.20 L636.94 828.20 L636.94 833.20 L627.90 833.20 L627.90 828.20 L618.86 828.20 L618.86 833.20 L609.82 833.20 L609.82 828.20 L600.78 828.20 L600.78 833.20 L591.74 833.20 L591.74 828.20 L582.70 828.20 L582.70 833.20 L573.66 833.20 L573.66 828.20 L564.62 828.20 L564.62 833.20 L555.58 833.20 L555.58 828.20 L546.54 828.20 L546.54 833.20 L537.50 833.20 L537.50 828.20 L528.46 828.20 L528.46 833.20 L519.42 833.20 L519.42 828.20 L515.90 828.20 L515.90 819.40 L511.70 819.40 L511.70 810.36 L515.90 810.36 L515.90 801.32 L511.70 801.32 L511.70 792.28 L515.90 792.28 L515.90 783.24 L511.70 783.24 L511.70 774.20 L515.90 774.20 L515.90 765.16 L511.70 765.16 L511.70 756.12 L515.90 756.12 L515.90 747.08 L511.70 747.08 L511.70 738.04 L515.90 738.04 L515.90 729.00 L511.70 729.00 L511.70 719.96 L515.90 719.96 L515.90 710.92 L511.70 710.92 L511.70 701.88 L515.90 701.88 L515.90 692.84 L511.70 692.84 L511.70 683.80 L515.90 683.80 L515.90 674.76 L511.70 674.76 L511.70 665.72 L515.90 665.72 L515.90 656.68 L511.70 656.68 L511.70 647.64 L515.90 647.64 L515.90 638.60 L511.70 638.60 L511.70 629.56 L515.90 629.56 L515.90 620.52 L511.70 620.52 L511.70 611.48 L515.90 611.48 L515.90 601.30Z"/>
<path d="M522.4 701.00h5.2v9h-5.2Z"/>
<path d="M522.4 719.00h5.2v9h-5.2Z"/>
<path d="M522.4 737.00h5.2v9h-5.2Z"/>
<path d="M522.4 755.00h5.2v9h-5.2Z"/>
<path d="M522.4 773.00h5.2v9h-5.2Z"/>
<path d="M522.4 791.00h5.2v9h-5.2Z"/>
<path d="M522.4 809.00h5.2v9h-5.2Z"/>
<path d="M614.20 608.3h9.5v5.1h-9.5Z"/>
<path d="M632.20 608.3h9.5v5.1h-9.5Z"/>
<path d="M650.20 608.3h9.5v5.1h-9.5Z"/>
<path d="M668.20 608.3h9.5v5.1h-9.5Z"/>
<path d="M862.20 601.30 L875.40 601.30 L875.40 597.40 L884.44 597.40 L884.44 601.30 L893.48 601.30 L893.48 597.40 L902.52 597.40 L902.52 601.30 L911.56 601.30 L911.56 597.40 L920.60 597.40 L920.60 601.30 L929.64 601.30 L929.64 597.40 L938.68 597.40 L938.68 601.30 L947.72 601.30 L947.72 597.40 L956.76 597.40 L956.76 601.30 L965.80 601.30 L965.80 597.40 L974.84 597.40 L974.84 601.30 L983.88 601.30 L983.88 597.40 L992.92 597.40 L992.92 601.30 L1001.96 601.30 L1001.96 597.40 L1011.00 597.40 L1011.00 601.30 L1020.04 601.30 L1020.04 597.40 L1029.08 597.40 L1029.08 601.30 L1038.12 601.30 L1038.12 597.40 L1047.16 597.40 L1047.16 601.30 L1056.20 601.30 L1056.20 597.40 L1065.24 597.40 L1065.24 601.30 L1074.28 601.30 L1074.28 597.40 L1083.32 597.40 L1083.32 601.30 L1097.90 601.30 L1097.90 611.70 L1093.50 611.70 L1093.50 620.74 L1097.90 620.74 L1097.90 629.78 L1093.50 629.78 L1093.50 638.82 L1097.90 638.82 L1097.90 647.86 L1093.50 647.86 L1093.50 656.90 L1097.90 656.90 L1097.90 665.94 L1093.50 665.94 L1093.50 674.98 L1097.90 674.98 L1097.90 684.02 L1093.50 684.02 L1093.50 693.06 L1097.90 693.06 L1097.90 702.10 L1093.50 702.10 L1093.50 711.14 L1097.90 711.14 L1097.90 720.18 L1093.50 720.18 L1093.50 729.22 L1097.90 729.22 L1097.90 738.26 L1093.50 738.26 L1093.50 747.30 L1097.90 747.30 L1097.90 756.34 L1093.50 756.34 L1093.50 765.38 L1097.90 765.38 L1097.90 774.42 L1093.50 774.42 L1093.50 783.46 L1097.90 783.46 L1097.90 792.50 L1093.50 792.50 L1093.50 801.54 L1097.90 801.54 L1097.90 810.58 L1093.50 810.58 L1093.50 819.62 L1097.90 819.62 L1097.90 828.20 L1084.20 828.20 L1084.20 833.10 L1075.16 833.10 L1075.16 828.20 L1066.12 828.20 L1066.12 833.10 L1057.08 833.10 L1057.08 828.20 L1048.04 828.20 L1048.04 833.10 L1039.00 833.10 L1039.00 828.20 L1029.96 828.20 L1029.96 833.10 L1020.92 833.10 L1020.92 828.20 L1011.88 828.20 L1011.88 833.10 L1002.84 833.10 L1002.84 828.20 L993.80 828.20 L993.80 833.10 L984.76 833.10 L984.76 828.20 L975.72 828.20 L975.72 833.10 L966.68 833.10 L966.68 828.20 L957.64 828.20 L957.64 833.10 L948.60 833.10 L948.60 828.20 L939.56 828.20 L939.56 833.10 L930.52 833.10 L930.52 828.20 L921.48 828.20 L921.48 833.10 L912.44 833.10 L912.44 828.20 L903.40 828.20 L903.40 833.10 L894.36 833.10 L894.36 828.20 L885.32 828.20 L885.32 833.10 L876.28 833.10 L876.28 828.20 L862.20 828.20 L862.20 819.00 L866.70 819.00 L866.70 809.96 L862.20 809.96 L862.20 800.92 L866.70 800.92 L866.70 791.88 L862.20 791.88 L862.20 782.84 L866.70 782.84 L866.70 773.80 L862.20 773.80 L862.20 764.76 L866.70 764.76 L866.70 755.72 L862.20 755.72 L862.20 746.68 L866.70 746.68 L866.70 737.64 L862.20 737.64 L862.20 728.60 L866.70 728.60 L866.70 719.56 L862.20 719.56 L862.20 710.52 L866.70 710.52 L866.70 701.48 L862.20 701.48 L862.20 692.44 L866.70 692.44 L866.70 683.40 L862.20 683.40 L862.20 674.36 L866.70 674.36 L866.70 665.32 L862.20 665.32 L862.20 656.28 L866.70 656.28 L866.70 647.24 L862.20 647.24 L862.20 638.20 L866.70 638.20 L866.70 629.16 L862.20 629.16 L862.20 620.12 L866.70 620.12 L866.70 611.08 L862.20 611.08 L862.20 601.30Z"/>
<path d="M1115.4 612V745.00C1115.4 809.02 1187.08 843.5 1205.00 843.5H1290.5V838.3H1205.00C1188.04 838.3 1120.2 805.64 1120.2 745.00V612Z"/>
<path d="M1122.2 605V741.67C1122.2 796.99 1178.86 836.5 1211.67 836.5H1297.6V831.3H1211.67C1180.62 831.3 1127.0 793.95 1127.0 741.67V605Z"/>
<path d="M1131.6 609.2V738.33C1131.6 785.44 1172.08 829.5 1218.33 829.5H1295.6V824.3H1218.33C1174.64 824.3 1136.3999999999999 782.75 1136.3999999999999 738.33V609.2Z"/>
<path d="M1138.4 602.4V735.00C1138.4 774.47 1164.38 822.7 1225.00 822.7H1302.7V817.5H1225.00C1167.74 817.5 1143.2 772.12 1143.2 735.00V602.4Z"/>
<path d="M1178.3 653.2H1269.2V746.5H1178.3Z"/>
<path d="M1178.3 746.5A91 93.3 0 0 1 1269.2 653.2A91 93.3 0 0 1 1178.3 746.5Z"/>
<rect x="-2.6" y="-4.6" width="5.2" height="9.2" transform="translate(174.68 680.04) rotate(13.5)"/>
<rect x="-2.6" y="-4.6" width="5.2" height="9.2" transform="translate(180.55 663.19) rotate(24.9)"/>
<rect x="-2.6" y="-4.6" width="5.2" height="9.2" transform="translate(192.61 644.00) rotate(39.4)"/>
<rect x="-2.6" y="-4.6" width="5.2" height="9.2" transform="translate(205.49 631.21) rotate(51.0)"/>
<rect x="-2.6" y="-4.6" width="5.2" height="9.2" transform="translate(225.19 619.09) rotate(65.8)"/>
<rect x="-2.6" y="-4.6" width="5.2" height="9.2" transform="translate(242.56 613.33) rotate(77.5)"/>
<rect x="-2.6" y="-4.6" width="5.2" height="9.2" transform="translate(527.08 680.04) rotate(13.5)"/>
<rect x="-2.6" y="-4.6" width="5.2" height="9.2" transform="translate(532.95 663.19) rotate(24.9)"/>
<rect x="-2.6" y="-4.6" width="5.2" height="9.2" transform="translate(545.01 644.00) rotate(39.4)"/>
<rect x="-2.6" y="-4.6" width="5.2" height="9.2" transform="translate(557.89 631.21) rotate(51.0)"/>
<rect x="-2.6" y="-4.6" width="5.2" height="9.2" transform="translate(577.59 619.09) rotate(65.8)"/>
<rect x="-2.6" y="-4.6" width="5.2" height="9.2" transform="translate(594.96 613.33) rotate(77.5)"/>
</g>
<path d="M703.80 368.5V392.8 M703.80 402.20V441.10 M703.80 450.40V489.30 M703.80 498.60V537.50 M703.80 546.80V585.70 M700.30 378.20V417.10 M700.30 426.40V465.30 M700.30 474.60V513.50 M700.30 522.80V561.70 M700.30 571.00V594.70 M710.61 368.5V392.8 M710.61 402.20V441.10 M710.61 450.40V489.30 M710.61 498.60V537.50 M710.61 546.80V585.70 M707.11 378.20V417.10 M707.11 426.40V465.30 M707.11 474.60V513.50 M707.11 522.80V561.70 M707.11 571.00V594.70 M717.42 368.5V392.8 M717.42 402.20V441.10 M717.42 450.40V489.30 M717.42 498.60V537.50 M717.42 546.80V585.70 M713.92 378.20V417.10 M713.92 426.40V465.30 M713.92 474.60V513.50 M713.92 522.80V561.70 M713.92 571.00V594.70 M724.22 368.5V392.8 M724.22 402.20V441.10 M724.22 450.40V489.30 M724.22 498.60V537.50 M724.22 546.80V585.70 M720.72 378.20V417.10 M720.72 426.40V465.30 M720.72 474.60V513.50 M720.72 522.80V561.70 M720.72 571.00V594.70 M731.03 368.5V392.8 M731.03 402.20V441.10 M731.03 450.40V489.30 M731.03 498.60V537.50 M731.03 546.80V585.70 M727.53 378.20V417.10 M727.53 426.40V465.30 M727.53 474.60V513.50 M727.53 522.80V561.70 M727.53 571.00V594.70 M737.84 368.5V392.8 M737.84 402.20V441.10 M737.84 450.40V489.30 M737.84 498.60V537.50 M737.84 546.80V585.70 M734.34 378.20V417.10 M734.34 426.40V465.30 M734.34 474.60V513.50 M734.34 522.80V561.70 M734.34 571.00V594.70 M744.65 368.5V392.8 M744.65 402.20V441.10 M744.65 450.40V489.30 M744.65 498.60V537.50 M744.65 546.80V585.70 M741.15 378.20V417.10 M741.15 426.40V465.30 M741.15 474.60V513.50 M741.15 522.80V561.70 M741.15 571.00V594.70 M751.46 368.5V392.8 M751.46 402.20V441.10 M751.46 450.40V489.30 M751.46 498.60V537.50 M751.46 546.80V585.70 M747.96 378.20V417.10 M747.96 426.40V465.30 M747.96 474.60V513.50 M747.96 522.80V561.70 M747.96 571.00V594.70 M758.26 368.5V392.8 M758.26 402.20V441.10 M758.26 450.40V489.30 M758.26 498.60V537.50 M758.26 546.80V585.70 M754.76 378.20V417.10 M754.76 426.40V465.30 M754.76 474.60V513.50 M754.76 522.80V561.70 M754.76 571.00V594.70 M765.07 368.5V392.8 M765.07 402.20V441.10 M765.07 450.40V489.30 M765.07 498.60V537.50 M765.07 546.80V585.70 M761.57 378.20V417.10 M761.57 426.40V465.30 M761.57 474.60V513.50 M761.57 522.80V561.70 M761.57 571.00V594.70 M771.88 368.5V392.8 M771.88 402.20V441.10 M771.88 450.40V489.30 M771.88 498.60V537.50 M771.88 546.80V585.70 M768.38 378.20V417.10 M768.38 426.40V465.30 M768.38 474.60V513.50 M768.38 522.80V561.70 M768.38 571.00V594.70 M778.69 368.5V392.8 M778.69 402.20V441.10 M778.69 450.40V489.30 M778.69 498.60V537.50 M778.69 546.80V585.70 M775.19 378.20V417.10 M775.19 426.40V465.30 M775.19 474.60V513.50 M775.19 522.80V561.70 M775.19 571.00V594.70 M785.50 368.5V392.8 M785.50 402.20V441.10 M785.50 450.40V489.30 M785.50 498.60V537.50 M785.50 546.80V585.70 M782.00 378.20V417.10 M782.00 426.40V465.30 M782.00 474.60V513.50 M782.00 522.80V561.70 M782.00 571.00V594.70 M792.30 368.5V392.8 M792.30 402.20V441.10 M792.30 450.40V489.30 M792.30 498.60V537.50 M792.30 546.80V585.70 M788.80 378.20V417.10 M788.80 426.40V465.30 M788.80 474.60V513.50 M788.80 522.80V561.70 M788.80 571.00V594.70 M799.11 368.5V392.8 M799.11 402.20V441.10 M799.11 450.40V489.30 M799.11 498.60V537.50 M799.11 546.80V585.70 M795.61 378.20V417.10 M795.61 426.40V465.30 M795.61 474.60V513.50 M795.61 522.80V561.70 M795.61 571.00V594.70 M805.92 368.5V392.8 M805.92 402.20V441.10 M805.92 450.40V489.30 M805.92 498.60V537.50 M805.92 546.80V585.70 M802.42 378.20V417.10 M802.42 426.40V465.30 M802.42 474.60V513.50 M802.42 522.80V561.70 M802.42 571.00V594.70 M812.73 368.5V392.8 M812.73 402.20V441.10 M812.73 450.40V489.30 M812.73 498.60V537.50 M812.73 546.80V585.70 M809.23 378.20V417.10 M809.23 426.40V465.30 M809.23 474.60V513.50 M809.23 522.80V561.70 M809.23 571.00V594.70 M819.54 368.5V392.8 M819.54 402.20V441.10 M819.54 450.40V489.30 M819.54 498.60V537.50 M819.54 546.80V585.70 M816.04 378.20V417.10 M816.04 426.40V465.30 M816.04 474.60V513.50 M816.04 522.80V561.70 M816.04 571.00V594.70 M826.34 368.5V392.8 M826.34 402.20V441.10 M826.34 450.40V489.30 M826.34 498.60V537.50 M826.34 546.80V585.70 M822.84 378.20V417.10 M822.84 426.40V465.30 M822.84 474.60V513.50 M822.84 522.80V561.70 M822.84 571.00V594.70 M833.15 368.5V392.8 M833.15 402.20V441.10 M833.15 450.40V489.30 M833.15 498.60V537.50 M833.15 546.80V585.70 M829.65 378.20V417.10 M829.65 426.40V465.30 M829.65 474.60V513.50 M829.65 522.80V561.70 M829.65 571.00V594.70 M839.96 368.5V392.8 M839.96 402.20V441.10 M839.96 450.40V489.30 M839.96 498.60V537.50 M839.96 546.80V585.70 M836.46 378.20V417.10 M836.46 426.40V465.30 M836.46 474.60V513.50 M836.46 522.80V561.70 M836.46 571.00V594.70 M846.77 368.5V392.8 M846.77 402.20V441.10 M846.77 450.40V489.30 M846.77 498.60V537.50 M846.77 546.80V585.70 M843.27 378.20V417.10 M843.27 426.40V465.30 M843.27 474.60V513.50 M843.27 522.80V561.70 M843.27 571.00V594.70 M853.58 368.5V392.8 M853.58 402.20V441.10 M853.58 450.40V489.30 M853.58 498.60V537.50 M853.58 546.80V585.70 M850.08 378.20V417.10 M850.08 426.40V465.30 M850.08 474.60V513.50 M850.08 522.80V561.70 M850.08 571.00V594.70 M860.38 368.5V392.8 M860.38 402.20V441.10 M860.38 450.40V489.30 M860.38 498.60V537.50 M860.38 546.80V585.70 M856.88 378.20V417.10 M856.88 426.40V465.30 M856.88 474.60V513.50 M856.88 522.80V561.70 M856.88 571.00V594.70 M867.19 368.5V392.8 M867.19 402.20V441.10 M867.19 450.40V489.30 M867.19 498.60V537.50 M867.19 546.80V585.70 M863.69 378.20V417.10 M863.69 426.40V465.30 M863.69 474.60V513.50 M863.69 522.80V561.70 M863.69 571.00V594.70 M874.00 368.5V392.8 M874.00 402.20V441.10 M874.00 450.40V489.30 M874.00 498.60V537.50 M874.00 546.80V585.70 M870.50 378.20V417.10 M870.50 426.40V465.30 M870.50 474.60V513.50 M870.50 522.80V561.70 M870.50 571.00V594.70 M880.81 368.5V392.8 M880.81 402.20V441.10 M880.81 450.40V489.30 M880.81 498.60V537.50 M880.81 546.80V585.70 M877.31 378.20V417.10 M877.31 426.40V465.30 M877.31 474.60V513.50 M877.31 522.80V561.70 M877.31 571.00V594.70 M887.62 368.5V392.8 M887.62 402.20V441.10 M887.62 450.40V489.30 M887.62 498.60V537.50 M887.62 546.80V585.70 M884.12 378.20V417.10 M884.12 426.40V465.30 M884.12 474.60V513.50 M884.12 522.80V561.70 M884.12 571.00V594.70 M894.42 368.5V392.8 M894.42 402.20V441.10 M894.42 450.40V489.30 M894.42 498.60V537.50 M894.42 546.80V585.70 M890.92 378.20V417.10 M890.92 426.40V465.30 M890.92 474.60V513.50 M890.92 522.80V561.70 M890.92 571.00V594.70 M901.23 368.5V392.8 M901.23 402.20V441.10 M901.23 450.40V489.30 M901.23 498.60V537.50 M901.23 546.80V585.70 M897.73 378.20V417.10 M897.73 426.40V465.30 M897.73 474.60V513.50 M897.73 522.80V561.70 M897.73 571.00V594.70 M908.04 368.5V392.8 M908.04 402.20V441.10 M908.04 450.40V489.30 M908.04 498.60V537.50 M908.04 546.80V585.70 M904.54 378.20V417.10 M904.54 426.40V465.30 M904.54 474.60V513.50 M904.54 522.80V561.70 M904.54 571.00V594.70 M914.85 368.5V392.8 M914.85 402.20V441.10 M914.85 450.40V489.30 M914.85 498.60V537.50 M914.85 546.80V585.70 M911.35 378.20V417.10 M911.35 426.40V465.30 M911.35 474.60V513.50 M911.35 522.80V561.70 M911.35 571.00V594.70 M921.66 368.5V392.8 M921.66 402.20V441.10 M921.66 450.40V489.30 M921.66 498.60V537.50 M921.66 546.80V585.70 M918.16 378.20V417.10 M918.16 426.40V465.30 M918.16 474.60V513.50 M918.16 522.80V561.70 M918.16 571.00V594.70 M928.46 368.5V392.8 M928.46 402.20V441.10 M928.46 450.40V489.30 M928.46 498.60V537.50 M928.46 546.80V585.70 M924.96 378.20V417.10 M924.96 426.40V465.30 M924.96 474.60V513.50 M924.96 522.80V561.70 M924.96 571.00V594.70 M935.27 368.5V392.8 M935.27 402.20V441.10 M935.27 450.40V489.30 M935.27 498.60V537.50 M935.27 546.80V585.70 M931.77 378.20V417.10 M931.77 426.40V465.30 M931.77 474.60V513.50 M931.77 522.80V561.70 M931.77 571.00V594.70 M942.08 368.5V392.8 M942.08 402.20V441.10 M942.08 450.40V489.30 M942.08 498.60V537.50 M942.08 546.80V585.70 M938.58 378.20V417.10 M938.58 426.40V465.30 M938.58 474.60V513.50 M938.58 522.80V561.70 M938.58 571.00V594.70 M948.89 368.5V392.8 M948.89 402.20V441.10 M948.89 450.40V489.30 M948.89 498.60V537.50 M948.89 546.80V585.70 M945.39 378.20V417.10 M945.39 426.40V465.30 M945.39 474.60V513.50 M945.39 522.80V561.70 M945.39 571.00V594.70 M955.70 368.5V392.8 M955.70 402.20V441.10 M955.70 450.40V489.30 M955.70 498.60V537.50 M955.70 546.80V585.70 M952.20 378.20V417.10 M952.20 426.40V465.30 M952.20 474.60V513.50 M952.20 522.80V561.70 M952.20 571.00V594.70 M962.50 368.5V392.8 M962.50 402.20V441.10 M962.50 450.40V489.30 M962.50 498.60V537.50 M962.50 546.80V585.70 M959.00 378.20V417.10 M959.00 426.40V465.30 M959.00 474.60V513.50 M959.00 522.80V561.70 M959.00 571.00V594.70 M969.31 368.5V392.8 M969.31 402.20V441.10 M969.31 450.40V489.30 M969.31 498.60V537.50 M969.31 546.80V585.70 M965.81 378.20V417.10 M965.81 426.40V465.30 M965.81 474.60V513.50 M965.81 522.80V561.70 M965.81 571.00V594.70 M976.12 368.5V392.8 M976.12 402.20V441.10 M976.12 450.40V489.30 M976.12 498.60V537.50 M976.12 546.80V585.70 M972.62 378.20V417.10 M972.62 426.40V465.30 M972.62 474.60V513.50 M972.62 522.80V561.70 M972.62 571.00V594.70 M982.93 368.5V392.8 M982.93 402.20V441.10 M982.93 450.40V489.30 M982.93 498.60V537.50 M982.93 546.80V585.70 M979.43 378.20V417.10 M979.43 426.40V465.30 M979.43 474.60V513.50 M979.43 522.80V561.70 M979.43 571.00V594.70 M989.74 368.5V392.8 M989.74 402.20V441.10 M989.74 450.40V489.30 M989.74 498.60V537.50 M989.74 546.80V585.70 M986.24 378.20V417.10 M986.24 426.40V465.30 M986.24 474.60V513.50 M986.24 522.80V561.70 M986.24 571.00V594.70 M996.54 368.5V392.8 M996.54 402.20V441.10 M996.54 450.40V489.30 M996.54 498.60V537.50 M996.54 546.80V585.70 M993.04 378.20V417.10 M993.04 426.40V465.30 M993.04 474.60V513.50 M993.04 522.80V561.70 M993.04 571.00V594.70 M1003.35 368.5V392.8 M1003.35 402.20V441.10 M1003.35 450.40V489.30 M1003.35 498.60V537.50 M1003.35 546.80V585.70 M999.85 378.20V417.10 M999.85 426.40V465.30 M999.85 474.60V513.50 M999.85 522.80V561.70 M999.85 571.00V594.70 M1010.16 368.5V392.8 M1010.16 402.20V441.10 M1010.16 450.40V489.30 M1010.16 498.60V537.50 M1010.16 546.80V585.70 M1006.66 378.20V417.10 M1006.66 426.40V465.30 M1006.66 474.60V513.50 M1006.66 522.80V561.70 M1006.66 571.00V594.70 M1016.97 368.5V392.8 M1016.97 402.20V441.10 M1016.97 450.40V489.30 M1016.97 498.60V537.50 M1016.97 546.80V585.70 M1013.47 378.20V417.10 M1013.47 426.40V465.30 M1013.47 474.60V513.50 M1013.47 522.80V561.70 M1013.47 571.00V594.70 M1023.78 368.5V392.8 M1023.78 402.20V441.10 M1023.78 450.40V489.30 M1023.78 498.60V537.50 M1023.78 546.80V585.70 M1020.28 378.20V417.10 M1020.28 426.40V465.30 M1020.28 474.60V513.50 M1020.28 522.80V561.70 M1020.28 571.00V594.70 M1030.58 368.5V392.8 M1030.58 402.20V441.10 M1030.58 450.40V489.30 M1030.58 498.60V537.50 M1030.58 546.80V585.70 M1027.08 378.20V417.10 M1027.08 426.40V465.30 M1027.08 474.60V513.50 M1027.08 522.80V561.70 M1027.08 571.00V594.70 M1037.39 368.5V392.8 M1037.39 402.20V441.10 M1037.39 450.40V489.30 M1037.39 498.60V537.50 M1037.39 546.80V585.70 M1033.89 378.20V417.10 M1033.89 426.40V465.30 M1033.89 474.60V513.50 M1033.89 522.80V561.70 M1033.89 571.00V594.70 M1044.20 368.5V392.8 M1044.20 402.20V441.10 M1044.20 450.40V489.30 M1044.20 498.60V537.50 M1044.20 546.80V585.70 M1040.70 378.20V417.10 M1040.70 426.40V465.30 M1040.70 474.60V513.50 M1040.70 522.80V561.70 M1040.70 571.00V594.70 M1051.01 368.5V392.8 M1051.01 402.20V441.10 M1051.01 450.40V489.30 M1051.01 498.60V537.50 M1051.01 546.80V585.70 M1047.51 378.20V417.10 M1047.51 426.40V465.30 M1047.51 474.60V513.50 M1047.51 522.80V561.70 M1047.51 571.00V594.70" stroke="#ffa0a0" stroke-width="1" fill="none"/>
<g transform="translate(585 725) scale(0.09662)" fill="#000" fill-rule="evenodd">
<path d="M210 115C400 95 800 180 1100 360C1350 510 1470 640 1455 770C1440 880 1300 910 1150 905C900 895 500 700 250 520C100 410 60 300 90 230C115 175 150 150 210 115Z M220 155C130 230 130 330 220 430C450 650 850 850 1150 870C1330 880 1420 820 1400 730C1380 640 1300 560 1180 470C900 270 500 130 220 155Z"/>
<path d="M560 185C400 220 290 290 300 370C305 415 340 425 370 405C480 320 600 260 750 245L690 225C560 235 450 300 360 360C360 290 450 220 560 185Z"/>
<path d="M870 300C700 330 560 420 550 510C545 560 580 575 610 560C730 480 870 410 1030 385L975 360C840 385 720 440 620 495C650 410 760 340 870 300Z"/>
<path d="M1165 465C1030 500 920 580 905 670C900 720 935 725 965 710C1070 640 1180 600 1310 580L1275 550C1160 570 1060 620 975 655C1000 570 1080 510 1165 465Z"/>
</g>
<text x="680.5" y="706" font-family="Liberation Serif, serif" font-size="25" font-weight="bold" font-style="italic" fill="#000" stroke="#000" stroke-width="1.1" textLength="110" lengthAdjust="spacingAndGlyphs">Oui ! Oui !</text>
<text x="680.5" y="737.7" font-family="Liberation Serif, serif" font-size="25" font-weight="bold" font-style="italic" fill="#000" stroke="#000" stroke-width="1.1" textLength="131" lengthAdjust="spacingAndGlyphs">Baguette !!!</text>
<rect x="23" y="950" width="1359" height="22" fill="#2b2b2b" />
<rect x="455" y="957" width="480" height="8" fill="#5c5c5c" rx="4" />
<rect x="1382" y="96" width="22" height="854" fill="#2b2b2b" />
<rect x="1389" y="317" width="8" height="378" fill="#5c5c5c" rx="4" />
<rect x="1382" y="950" width="22" height="22" fill="#333333" />
<circle cx="1393" cy="961" r="2" fill="#e6e6e6"/>
<rect x="164" y="33" width="1" height="34" fill="#2a2a2a" />
<rect x="334" y="33" width="1" height="34" fill="#2a2a2a" />
<rect x="504" y="33" width="1" height="34" fill="#2a2a2a" />
<rect x="1196" y="33" width="1" height="34" fill="#2a2a2a" />
<rect x="10.35" y="42.55" width="14.0" height="13.7" fill="none" stroke="#e8e8e8" stroke-width="1.5" stroke-dasharray="1.5 1.5"/>
<circle cx="19.7" cy="48" r="3.7" fill="#e8e8e8"/><rect x="12.2" y="50" width="7.7" height="5" fill="#e8e8e8"/>
<rect x="51.45" y="42.55" width="14.0" height="13.7" fill="none" stroke="#e8e8e8" stroke-width="1.5" stroke-dasharray="1.5 1.5"/>
<path d="M55.5 45.5H64L62 47.8H53.5Z" fill="#d0d0d0"/>
<path d="M55.5 49.3H64L62 51.599999999999994H53.5Z" fill="#d0d0d0"/>
<path d="M55.5 53H64L62 55.3H53.5Z" fill="#d0d0d0"/>
<rect x="92.65" y="42.55" width="13.7" height="13.7" fill="none" stroke="#5a5a5a" stroke-width="1.5" stroke-dasharray="1.5 1.5"/>
<circle cx="101.5" cy="48" r="3.6" fill="#5a5a5a"/><rect x="94" y="50" width="7.7" height="5" fill="#5a5a5a"/>
<rect x="134.5" y="46.5" width="10" height="10" fill="none" stroke="#e8e8e8" stroke-width="1.5" stroke-dasharray="2.5 1.5"/><rect x="143" y="43" width="5" height="5" fill="#e8e8e8"/>
<rect x="191" y="42" width="5" height="10" fill="#6e6e6e"/><rect x="180" y="52.5" width="10" height="5" fill="#7a7a7a"/>
<path d="M189 44 Q183 44.5 182.5 49" stroke="#1e7b1e" stroke-width="2" fill="none"/><path d="M180 48 L185 48 L182.5 51.5Z" fill="#1e7b1e"/>
<rect x="221" y="42" width="5" height="10" fill="#6e6e6e"/><rect x="227" y="52.5" width="10" height="5" fill="#7a7a7a"/>
<path d="M228 44 Q234 44.5 234.5 49" stroke="#1e7b1e" stroke-width="2" fill="none"/><path d="M232 48 L237 48 L234.5 51.5Z" fill="#1e7b1e"/>
<path d="M270 44 L263 55.5 H269.5Z" fill="#5a5a5a"/><path d="M271.5 44 L278 55.5 H271.5Z" fill="#6a6a6a"/>
<path d="M270.7 42.5V57" stroke="#bdbdbd" stroke-width="1" stroke-dasharray="1.5 1"/>
<path d="M306 43 L316 50 H306Z" fill="#5a5a5a"/><path d="M306 51 L316 51 L306 58Z" fill="#808080"/>
<path d="M304 50.5H318" stroke="#bdbdbd" stroke-width="1" stroke-dasharray="1.5 1"/>
<rect x="350.8" y="43" width="13" height="2" fill="#bdbdbd"/>
<rect x="350.8" y="47" width="5" height="2" fill="#7d7d7d"/>
<rect x="350.8" y="51" width="5" height="2" fill="#7d7d7d"/>
<rect x="350.8" y="55" width="5" height="2" fill="#7d7d7d"/>
<path d="M361 57V50.5" stroke="#1e7b1e" stroke-width="2"/><path d="M358 51.5L361 47.5L364 51.5Z" fill="#1e7b1e"/>
<rect x="391.8" y="47" width="13" height="2" fill="#bdbdbd"/>
<rect x="391.8" y="43" width="5" height="2" fill="#7d7d7d"/>
<rect x="391.8" y="51" width="5" height="2" fill="#7d7d7d"/>
<rect x="391.8" y="55" width="5" height="2" fill="#7d7d7d"/>
<path d="M402 57V53.5" stroke="#1e7b1e" stroke-width="2"/><path d="M399 54.5L402 50.5L405 54.5Z" fill="#1e7b1e"/>
<rect x="433" y="51" width="13" height="2" fill="#bdbdbd"/>
<rect x="433" y="43" width="5" height="2" fill="#7d7d7d"/>
<rect x="433" y="47" width="5" height="2" fill="#7d7d7d"/>
<rect x="433" y="55" width="5" height="2" fill="#7d7d7d"/>
<path d="M443 43V46.5" stroke="#1e7b1e" stroke-width="2"/><path d="M440 45.5L443 49.5L446 45.5Z" fill="#1e7b1e"/>
<rect x="473.8" y="55" width="13" height="2" fill="#bdbdbd"/>
<rect x="473.8" y="43" width="5" height="2" fill="#7d7d7d"/>
<rect x="473.8" y="47" width="5" height="2" fill="#7d7d7d"/>
<rect x="473.8" y="51" width="5" height="2" fill="#7d7d7d"/>
<path d="M484 43V50.5" stroke="#1e7b1e" stroke-width="2"/><path d="M481 49.5L484 53.5L487 49.5Z" fill="#1e7b1e"/>
<text x="509.2" y="56" font-size="15" fill="#a0a0a0" textLength="13" lengthAdjust="spacingAndGlyphs" >X:</text>
<rect x="524.9" y="33.5" width="120.89999999999998" height="34" fill="#303030" rx="5" stroke="#202020" stroke-width="1" />
<rect x="612.3" y="34" width="1" height="33" fill="#2a2a2a" />
<rect x="629.3" y="34" width="1" height="33" fill="#2a2a2a" />
<text x="532.6" y="56" font-size="15" fill="#8c8c8c" textLength="51" lengthAdjust="spacingAndGlyphs" >297.779</text>
<path d="M615.3 50.5H626.3M632.3 50.5H643.3M637.8 45V56" stroke="#4a4a4a" stroke-width="1.3"/>
<text x="651.2" y="56" font-size="15" fill="#a0a0a0" textLength="12" lengthAdjust="spacingAndGlyphs" >Y:</text>
<rect x="665.8" y="33.5" width="121.20000000000005" height="34" fill="#303030" rx="5" stroke="#202020" stroke-width="1" />
<rect x="753.5" y="34" width="1" height="33" fill="#2a2a2a" />
<rect x="770.5" y="34" width="1" height="33" fill="#2a2a2a" />
<text x="673.5" y="56" font-size="15" fill="#8c8c8c" textLength="50" lengthAdjust="spacingAndGlyphs" >313.641</text>
<path d="M756.5 50.5H767.5M773.5 50.5H784.5M779.0 45V56" stroke="#4a4a4a" stroke-width="1.3"/>
<text x="792.5" y="56" font-size="15" fill="#a0a0a0" textLength="17.5" lengthAdjust="spacingAndGlyphs" >W:</text>
<rect x="813.0" y="33.5" width="121.20000000000005" height="34" fill="#303030" rx="5" stroke="#202020" stroke-width="1" />
<rect x="900.7" y="34" width="1" height="33" fill="#2a2a2a" />
<rect x="917.7" y="34" width="1" height="33" fill="#2a2a2a" />
<text x="820.7" y="56" font-size="15" fill="#8c8c8c" textLength="42.5" lengthAdjust="spacingAndGlyphs" >88.396</text>
<path d="M903.7 50.5H914.7M920.7 50.5H931.7M926.2 45V56" stroke="#4a4a4a" stroke-width="1.3"/>
<text x="980.5" y="56" font-size="15" fill="#a0a0a0" textLength="15" lengthAdjust="spacingAndGlyphs" >H:</text>
<rect x="998.0" y="33.5" width="120.5" height="34" fill="#303030" rx="5" stroke="#202020" stroke-width="1" />
<rect x="1085" y="34" width="1" height="33" fill="#2a2a2a" />
<rect x="1102" y="34" width="1" height="33" fill="#2a2a2a" />
<text x="1005.7" y="56" font-size="15" fill="#8c8c8c" textLength="43.5" lengthAdjust="spacingAndGlyphs" >51.178</text>
<path d="M1088 50.5H1099M1105 50.5H1116M1110.5 45V56" stroke="#4a4a4a" stroke-width="1.3"/>
<rect x="953" y="49.5" width="10" height="8" fill="#eeeeee"/><path d="M956 49.5V46.5A3.5 3.5 0 0 1 963 46.5V48" stroke="#eeeeee" stroke-width="1.6" fill="none"/>
<rect x="1126" y="33.5" width="64.5" height="34" fill="#303030" rx="5" stroke="#202020" stroke-width="1" />
<text x="1136.5" y="57" font-size="15" fill="#9a9a9a" textLength="26" lengthAdjust="spacingAndGlyphs" >mm</text>
<path d="M1168 49L1173 54L1178 49" stroke="#9a9a9a" stroke-width="1.6" fill="none"/>
<defs><linearGradient id="bg1" x1="0" y1="0" x2="0" y2="1"><stop offset="0" stop-color="#23518b"/><stop offset="1" stop-color="#213f68"/></linearGradient></defs>
<rect x="1203.2" y="33.6" width="34" height="33.6" fill="url(#bg1)" rx="5" stroke="#1a1a1a" stroke-width="1" />
<path d="M1213.7 55.5h1.5M1216.7 55.5h1.5" stroke="#fff" stroke-width="2"/><path d="M1219.7 55.5h4.5" stroke="#fff" stroke-width="2"/><path d="M1223.7 52.5L1226.7 55.5L1223.7 58.5Z" fill="#fff"/>
<rect x="1244.1" y="33.6" width="34" height="33.6" fill="url(#bg1)" rx="5" stroke="#1a1a1a" stroke-width="1" />
<path d="M1254.6 55.5h1.5M1257.6 55.5h1.5" stroke="#fff" stroke-width="2"/><path d="M1260.6 55.5h4.5" stroke="#fff" stroke-width="2"/><path d="M1264.6 52.5L1267.6 55.5L1264.6 58.5Z" fill="#fff"/>
<rect x="1285.4" y="33.6" width="34" height="33.6" fill="url(#bg1)" rx="5" stroke="#1a1a1a" stroke-width="1" />
<path d="M1295.9 55.5h1.5M1298.9 55.5h1.5" stroke="#fff" stroke-width="2"/><path d="M1301.9 55.5h4.5" stroke="#fff" stroke-width="2"/><path d="M1305.9 52.5L1308.9 55.5L1305.9 58.5Z" fill="#fff"/>
<rect x="1326.3" y="33.6" width="34" height="33.6" fill="url(#bg1)" rx="5" stroke="#1a1a1a" stroke-width="1" />
<path d="M1336.8 55.5h1.5M1339.8 55.5h1.5" stroke="#fff" stroke-width="2"/><path d="M1342.8 55.5h4.5" stroke="#fff" stroke-width="2"/><path d="M1346.8 52.5L1349.8 55.5L1346.8 58.5Z" fill="#fff"/>
<path d="M1213.7 44.5H1225.2V50.5M1213.7 47.5H1222.2V50.5" stroke="#fff" stroke-width="1.6" fill="none"/>
<path d="M1254.6 44.5H1260.6A5.5 5.5 0 0 1 1266.1 50.5M1254.6 47.5H1259.6A3 3 0 0 1 1263.1 50.5" stroke="#fff" stroke-width="1.6" fill="none"/>
<defs><linearGradient id="bg2" x1="0" x2="1"><stop offset="0" stop-color="#1a8cff"/><stop offset="1" stop-color="#ffffff"/></linearGradient></defs>
<path d="M1295.9 44H1307.9V51M1295.9 50.5H1305.4V52" stroke="#fff" stroke-width="1.2" fill="none"/><rect x="1295.9" y="45.5" width="9.5" height="3.5" fill="url(#bg2)"/>
<path d="M1336.8 44.5H1348.8V51M1336.8 50.5H1345.8V52" stroke="#fff" stroke-width="1.2" fill="none"/><path d="M1336.8 45.8l1.8 1.5-1.8 1.5M1340.3 45.8l1.8 1.5-1.8 1.5M1343.8 45.8l1.8 1.5-1.8 1.5" stroke="#2a9df4" stroke-width="1" fill="none"/>
<path d="M1847.5 43.6H1849.8A6.45 6.45 0 0 1 1849.8 56.5H1847.5" stroke="#eeeeee" stroke-width="3.2" fill="none"/><circle cx="1845.4" cy="43.4" r="1.6" fill="#109010"/><circle cx="1845.4" cy="56.5" r="1.6" fill="#109010"/>
<path d="M1845.5 47.5Q1842.5 47.5 1843.5 50Q1846 51 1843 53" stroke="#e8e8e8" stroke-width="1.1" fill="none"/>
<rect x="0" y="73" width="20.5" height="30" fill="#22497a" rx="4" stroke="#1a1a1a" stroke-width="1" />
<path d="M3.5 81.5L14.5 88.5L10 89.5L12.5 94.5L10.5 95.5L8 90.5L5 94Z" fill="none" stroke="#f0f0f0" stroke-width="1.6" stroke-linejoin="round"/>
<rect x="32" y="83" width="9" height="8" fill="#ebebeb"/><path d="M39.5 83V80A3 3 0 0 1 45.5 80V82" stroke="#ebebeb" stroke-width="1.5" fill="none"/>
<rect x="0" y="169.5" width="22" height="1" fill="#2e2e2e" />
<rect x="0" y="332" width="22" height="1" fill="#2e2e2e" />
<rect x="0" y="463.5" width="22" height="1" fill="#2e2e2e" />
<rect x="0" y="594" width="22" height="1" fill="#2e2e2e" />
<rect x="0" y="724.7" width="22" height="1" fill="#2e2e2e" />
<rect x="3.5" y="115.5" width="5" height="5" fill="none" stroke="#e8e8e8" stroke-width="1.3"/><path d="M9 115.5Q13 113.5 15 113.5M2 126Q2.5 122 3.5 121" stroke="#e8e8e8" stroke-width="0.8" fill="none"/><path d="M11.5 118.5L15.5 122L11.5 124Z" fill="#e8e8e8"/>
<circle cx="6.5" cy="150" r="4.3" fill="none" stroke="#e8e8e8" stroke-width="1.4"/><rect x="8" y="151" width="7.5" height="7.5" fill="none" stroke="#e8e8e8" stroke-width="1.4"/>
<rect x="2.8" y="180.8" width="13" height="13" fill="#f0148c" stroke="#e8e8e8" stroke-width="1.4"/>
<circle cx="9" cy="219" r="6.5" fill="#c0206e" stroke="#e8e8e8" stroke-width="1.4"/>
<path d="M2 248L7 244.5L11.5 248L10 253.5L4 253.5Z" fill="#b03070" stroke="#e8e8e8" stroke-width="1.2"/><path d="M11.5 249.5L13 252.5L16.5 253L14 255.5L14.5 258L11.5 256.5L8.5 258L9 255.5L6.5 253L10 252.5Z" fill="#6a3050" stroke="#e8e8e8" stroke-width="1"/>
<path d="M9 275.5L16 279.5V287.5L9 291.5L2 287.5V279.5Z" fill="#e8e8e8"/><path d="M9 277.5L14 280.5L9 283.5L4 280.5Z" fill="#6a3050"/><path d="M3.5 282L8 284.5V289.5L3.5 287Z" fill="#f0148c"/><path d="M14.5 282L10 284.5V289.5L14.5 287Z" fill="#d0d0d0"/>
<path d="M8.59 315.80 L8.50 315.85 L8.41 315.88 L8.30 315.91 L8.19 315.92 L8.08 315.92 L7.96 315.91 L7.84 315.88 L7.72 315.83 L7.60 315.77 L7.48 315.70 L7.37 315.61 L7.27 315.50 L7.18 315.38 L7.10 315.24 L7.03 315.10 L6.97 314.94 L6.94 314.77 L6.92 314.59 L6.92 314.41 L6.94 314.23 L6.98 314.04 L7.04 313.85 L7.12 313.67 L7.23 313.49 L7.36 313.32 L7.50 313.16 L7.67 313.01 L7.85 312.88 L8.06 312.77 L8.27 312.67 L8.50 312.60 L8.75 312.55 L9.00 312.53 L9.25 312.53 L9.51 312.56 L9.77 312.61 L10.03 312.70 L10.29 312.81 L10.53 312.95 L10.76 313.12 L10.98 313.31 L11.18 313.53 L11.36 313.78 L11.52 314.04 L11.65 314.32 L11.75 314.62 L11.83 314.94 L11.87 315.26 L11.88 315.60 L11.85 315.93 L11.79 316.27 L11.70 316.60 L11.56 316.93 L11.40 317.25 L11.20 317.55 L10.96 317.84 L10.70 318.10 L10.41 318.34 L10.09 318.55 L9.74 318.73 L9.37 318.88 L8.99 318.98 L8.59 319.05 L8.18 319.09 L7.77 319.07 L7.36 319.02 L6.94 318.93 L6.54 318.79 L6.14 318.61 L5.76 318.38 L5.40 318.12 L5.07 317.82 L4.76 317.48 L4.49 317.11 L4.25 316.71 L4.05 316.29 L3.90 315.84 L3.78 315.37 L3.72 314.89 L3.70 314.40 L3.74 313.90 L3.82 313.41 L3.96 312.92 L4.14 312.45 L4.37 311.99 L4.65 311.55 L4.98 311.13 L5.35 310.75 L5.76 310.41 L6.21 310.10 L6.69 309.84 L7.20 309.63 L7.73 309.46 L8.28 309.35 L8.85 309.30 L9.42 309.30 L10.00 309.36 L10.57 309.48 L11.13 309.65 L11.67 309.89 L12.20 310.17 L12.69 310.52 L13.16 310.91 L13.58 311.35 L13.96 311.84 L14.30 312.37 L14.58 312.93 L14.81 313.52 L14.97 314.14 L15.08 314.77 L15.12 315.42 L15.10 316.08 L15.01 316.73 L14.85 317.38 L14.63 318.01 L14.35 318.62 L14.00 319.20 L13.59 319.76 L13.13 320.27 L12.62 320.73" stroke="#e8e8e8" stroke-width="1.9" fill="none" stroke-linecap="round"/>
<circle cx="3" cy="343.7" r="1.9" fill="#0fa00f"/><rect x="1" y="350.9" width="4" height="4" fill="#0fa00f"/><path d="M3 345V351" stroke="#0fa00f" stroke-width="1"/>
<path d="M4.5 349.5Q7.5 344 12.7 343.2" stroke="#bdbdbd" stroke-width="0.8" fill="none"/>
<path d="M6.6 357.6L8 352.5L12.5 348L16.3 350.3L12.2 355.3Z" fill="#e8e8e8"/><path d="M7.2 357L11 352.2" stroke="#333" stroke-width="0.8"/><circle cx="11.3" cy="352.2" r="0.9" fill="#333"/>
<path d="M8.5 375.3Q5 374 3 376.5Q2 379 5.5 379.5Q9 380 8 382.5Q6.5 384.5 3.5 384" stroke="#0fa00f" stroke-width="1.3" fill="none"/><path d="M3.6 389L4.6 385.3L7.4 388Z" fill="#0fa00f"/>
<path d="M5.3 386L12.8 378.5L15.3 381L7.8 388.5Z" fill="#e8e8e8"/><path d="M13.8 377.5L14.6 376.7L17 379.2L16.2 380Z" fill="#e8e8e8"/>
<path d="M6 407.5Q8 409.5 6 411.5Q3 413.5 2.5 414.5" stroke="#0fa00f" stroke-width="1.3" fill="none"/><path d="M2 420.5Q3 417 6 416.5L7.2 417.5Q6 420 2 420.5Z" fill="#0fa00f"/>
<path d="M6.5 417L9.5 413.5L16.3 407.8L10.8 415.5L7.8 418.3Z" fill="#e8e8e8"/>
<text x="1" y="453.5" font-size="16" font-weight="bold" fill="#e8e8e8">A</text><rect x="15.5" y="438" width="1.5" height="16" fill="#1eaa1e"/>
<defs><linearGradient id="grd" x1="0" y1="0" x2="1" y2="1"><stop offset="0" stop-color="#1a8cff"/><stop offset="0.75" stop-color="#a8d8ff"/><stop offset="1" stop-color="#ffffff"/></linearGradient></defs>
<rect x="1.6" y="473.6" width="14.8" height="14.8" fill="#2a2a2a" stroke="#e8e8e8" stroke-width="1.2"/><rect x="3" y="475" width="12" height="12" fill="url(#grd)"/>
<defs><radialGradient id="msh"><stop offset="0" stop-color="#7fd0ff"/><stop offset="0.35" stop-color="#1a8ae0"/><stop offset="1" stop-color="#263340"/></radialGradient></defs>
<rect x="1.6" y="505.6" width="14.8" height="14.8" fill="url(#msh)" stroke="#e8e8e8" stroke-width="1.2"/>
<path d="M9 506Q6 509.5 9 513Q12 516.5 9 520M2 513Q5.5 516 9 513Q12.5 510 16 513" stroke="#e8e8e8" stroke-width="0.9" fill="none"/>
<path d="M4.3 538.3Q1.8 541.8 2 543.5A2.3 2.3 0 0 0 6.6 543.5Q6.8 541.8 4.3 538.3Z" fill="#1a8cff"/>
<path d="M5.2 553.8L3.8 552.4L11.5 544.7L12.9 546.1Z" fill="none" stroke="#e8e8e8" stroke-width="1.2" stroke-linejoin="round"/><path d="M11 543.5L13.8 540.7L16.6 543.5L13.8 546.3Z" fill="#e8e8e8"/><path d="M10.5 543.3L14 546.8" stroke="#e8e8e8" stroke-width="1.4"/>
<path d="M11.5 569.5L16.5 574.5L11 580L6 575Z" fill="none" stroke="#e8e8e8" stroke-width="1.3" stroke-linejoin="round"/><path d="M7.5 575.5L15.2 575.2L11 579.5Z" fill="#e8e8e8"/>
<path d="M4.2 579.8Q1.6 583 2 584.8A2.4 2.4 0 0 0 6.8 584.8Q7 583 4.2 579.8Z" fill="#1a8cff"/>
<path d="M2 619V615Q5 613 8 609Q11 606 14 607Q16.5 608.5 15.5 611Q13 609.5 12 612Q11.5 614 16 615V619Z" fill="#e8e8e8"/>
<rect x="7" y="643" width="9" height="8.5" fill="#e8e8e8"/><rect x="9" y="639.5" width="5" height="3" fill="#e8e8e8"/><circle cx="4" cy="639" r="0.8" fill="#aaa"/><circle cx="6" cy="641" r="0.8" fill="#aaa"/><circle cx="3" cy="643" r="0.8" fill="#aaa"/><circle cx="6" cy="637.5" r="0.8" fill="#aaa"/>
<path d="M6 677L12 669.5L16.5 673.5L10.5 681Z" fill="#e8e8e8"/><path d="M3.5 677L6 674.5L10.5 678.5L8 681Z" fill="#8a8a8a"/><rect x="2" y="682" width="4" height="1.8" fill="#e8e8e8"/><rect x="9" y="682" width="7" height="1.8" fill="#e8e8e8"/>
<path d="M2 703.5Q5.5 702.5 7.5 706.5Q9.5 710.5 12.5 710.5" stroke="#e8e8e8" stroke-width="2" fill="none"/><path d="M11 706L16.5 710.8L11 715.5Z" fill="#e8e8e8"/>
<path d="M3.5 736.8H11.5L14 739.3V749.6H3.5Z" fill="none" stroke="#e8e8e8" stroke-width="1.6"/><path d="M4 739.5H8M4 742H7M4 744.5H8M4 747H7" stroke="#e8e8e8" stroke-width="0.9"/>
<circle cx="8.2" cy="774.5" r="5" fill="none" stroke="#e8e8e8" stroke-width="1.6"/><path d="M11.8 778.2L15.2 781.8" stroke="#e8e8e8" stroke-width="2.2"/>
<path d="M1.8 803V814H10V806L7 803Z" fill="none" stroke="#e8e8e8" stroke-width="1.6"/><path d="M5.5 801.5V799.8H13L15.8 802.5V811.5H13" stroke="#e8e8e8" stroke-width="1.6" fill="none"/><path d="M7 803.5V806.5H10" stroke="#e8e8e8" stroke-width="1"/>
<rect x="1386.5" y="77.5" width="13" height="9" fill="none" stroke="#e8e8e8" stroke-width="1.2" rx="1"/><path d="M1391 89.5H1396M1393.5 87V89.5" stroke="#e8e8e8" stroke-width="1.2"/>
<rect x="1404" y="72" width="12" height="894" fill="#343434" />
<circle cx="1410" cy="516.5" r="1.2" fill="#e8e8e8"/>
<circle cx="1410" cy="522" r="1.2" fill="#e8e8e8"/>
<circle cx="1410" cy="527.5" r="1.2" fill="#e8e8e8"/>
<rect x="1416" y="77" width="449" height="889" fill="#2b2b2b" />
<rect x="1416" y="77" width="449" height="36" fill="#262626" />
<rect x="1416" y="113" width="449" height="1" fill="#1e1e1e" />
<rect x="1416" y="114" width="5" height="852" fill="#2f2f2f" />
<rect x="1507" y="80" width="24" height="24" fill="#262b30" />
<rect x="1531" y="80" width="76" height="24" fill="#2a2a2a" />
<rect x="1607" y="77" width="10" height="36" fill="#252525" />
<rect x="1617" y="80" width="92" height="24" fill="#2a2a2a" />
<text x="1541.5" y="97.8" font-size="15" fill="#242424" textLength="76" lengthAdjust="spacingAndGlyphs" >Rectangular S</text>
<rect x="1553" y="110" width="54" height="3.5" fill="#1c1c1c" />
<path d="M1441 89H1451L1448.5 92H1438.5Z" fill="#2aa0f0"/><path d="M1440 94H1450L1447.5 97H1437.5Z" fill="#8cc8f0"/><path d="M1443 99H1453L1450.5 102H1440.5Z" fill="#f0f0f0"/>
<circle cx="1519.2" cy="91.7" r="3.4" fill="#242424"/>
<path d="M1501.7 98.8V87.7H1512.8" stroke="#f0f0f0" stroke-width="1.1" fill="none"/><path d="M1506.5 96.5L1515.8 88.5L1516.5 89.3L1508 98.2Z" fill="#e8e8e8" stroke="#e8e8e8" stroke-width="0.8"/><path d="M1502 101.8Q1502.5 98.5 1505.2 97.8L1506.3 99Q1505.5 101.5 1502 101.8Z" fill="#2a9df4"/>
<rect x="1565" y="96" width="7.3" height="7" fill="#eaeaea"/>
<path d="M1569.2 90.3L1578.3 97.2" stroke="#16a016" stroke-width="2.3"/>
<path d="M1566.3 88.5A2.9 2.9 0 1 0 1570.3 87.6" stroke="#16a016" stroke-width="1.9" fill="none"/>
<path d="M1581.2 99A2.9 2.9 0 1 0 1577.2 99.9" stroke="#16a016" stroke-width="1.9" fill="none"/>
<rect x="1617" y="110" width="107" height="4" fill="#1f5aa8" />
<path d="M1629.5 87V101.5H1641V92L1636.5 87Z" fill="none" stroke="#f0f0f0" stroke-width="1.8"/><path d="M1636 96H1644" stroke="#1ea01e" stroke-width="1.8"/><path d="M1642 93.5L1645.5 96L1642 98.5Z" fill="#1ea01e"/>
<text x="1649" y="101" font-size="16" fill="#eaeaea" textLength="43" lengthAdjust="spacingAndGlyphs" >Export</text>
<path d="M1701 91.5L1708 98.5M1708 91.5L1701 98.5" stroke="#9a9a9a" stroke-width="1.8"/>
<rect x="1834" y="80" width="30" height="30" fill="#2a2a2a" rx="5" />
<path d="M1843.5 91.5L1849 97L1854.5 91.5" stroke="#9a9a9a" stroke-width="1.6" fill="none"/>
<rect x="1865" y="72" width="7" height="894" fill="#333333" />
<rect x="1421" y="141" width="444" height="1" fill="#1e1e1e" />
<rect x="1428" y="139" width="98" height="4" fill="#1f5aa8" />
<rect x="1437" y="124" width="11.5" height="8.2" fill="#14a014" />
<path d="M1439 131L1441.5 128L1443 130Z" fill="#1e1e1e"/><circle cx="1445" cy="126.5" r="1.1" fill="#1e1e1e"/>
<text x="1451" y="134.8" font-size="15.5" fill="#eaeaea" textLength="69" lengthAdjust="spacingAndGlyphs" >Single File</text>
<rect x="1543.5" y="126.5" width="8.5" height="7" fill="#14a014"/><path d="M1545.5 125V123.5H1554V130H1552.5M1547.5 123V121.5H1556V128H1554.5" stroke="#e0e0e0" stroke-width="0.9" fill="none"/>
<text x="1557" y="134.8" font-size="15.5" fill="#eaeaea" textLength="84.5" lengthAdjust="spacingAndGlyphs" >Batch Export</text>
<rect x="1421.8" y="147.5" width="105.40000000000009" height="33" fill="#333333" stroke="#1f1f1f" stroke-width="1" />
<text x="1440" y="170" font-size="15.5" fill="#a0a0a0" textLength="69.5" lengthAdjust="spacingAndGlyphs" >Document</text>
<defs><linearGradient id="pg" x1="0" y1="0" x2="0" y2="1"><stop offset="0" stop-color="#20497e"/><stop offset="1" stop-color="#213f66"/></linearGradient></defs>
<rect x="1532.9" y="147.5" width="104.89999999999986" height="33" fill="url(#pg)" stroke="#1a1a1a" stroke-width="1" />
<text x="1569.3" y="170" font-size="15.5" fill="#9fb0c4" textLength="33" lengthAdjust="spacingAndGlyphs" >Page</text>
<rect x="1643.8" y="147.5" width="105.5" height="33" fill="#333333" stroke="#1f1f1f" stroke-width="1" />
<text x="1666" y="170" font-size="15.5" fill="#6a6a6a" textLength="61.5" lengthAdjust="spacingAndGlyphs" >Selection</text>
<rect x="1754.5" y="147.5" width="105" height="33" fill="#333333" stroke="#1f1f1f" stroke-width="1" />
<text x="1781.5" y="170" font-size="15.5" fill="#a8a8a8" textLength="50.5" lengthAdjust="spacingAndGlyphs" >Custom</text>
<text x="1427" y="207.8" font-size="15" fill="#f0f0f0" font-weight="bold" textLength="75.5" lengthAdjust="spacingAndGlyphs" >Image Size</text>
<text x="1427" y="239" font-size="15" fill="#eaeaea" textLength="40.5" lengthAdjust="spacingAndGlyphs" >Width</text>
<text x="1427" y="260" font-size="15" fill="#eaeaea" textLength="25.5" lengthAdjust="spacingAndGlyphs" >(px)</text>
<text x="1643" y="239" font-size="15" fill="#eaeaea" textLength="45.5" lengthAdjust="spacingAndGlyphs" >Height</text>
<text x="1643" y="260" font-size="15" fill="#eaeaea" textLength="25.5" lengthAdjust="spacingAndGlyphs" >(px)</text>
<text x="1427" y="292" font-size="15" fill="#eaeaea" textLength="23" lengthAdjust="spacingAndGlyphs" >DPI</text>
<rect x="1477.7" y="226.9" width="154.79999999999995" height="32.099999999999994" fill="#2e2e2e" rx="5" stroke="#1e1e1e" stroke-width="1" />
<rect x="1598.5" y="227.4" width="1" height="31.099999999999994" fill="#242424" />
<rect x="1615.5" y="227.4" width="1" height="31.099999999999994" fill="#242424" />
<text x="1485.2" y="248.45" font-size="15" fill="#e6e6e6" textLength="32" lengthAdjust="spacingAndGlyphs" >2986</text>
<path d="M1601.5 242.95H1614M1618.5 242.95H1630.5M1624.5 236.95V248.95" stroke="#d0d0d0" stroke-width="1.3"/>
<rect x="1699.0" y="226.9" width="154.0" height="32.099999999999994" fill="#2e2e2e" rx="5" stroke="#1e1e1e" stroke-width="1" />
<rect x="1819.0" y="227.4" width="1" height="31.099999999999994" fill="#242424" />
<rect x="1836.0" y="227.4" width="1" height="31.099999999999994" fill="#242424" />
<text x="1706.5" y="248.45" font-size="15" fill="#e6e6e6" textLength="32.5" lengthAdjust="spacingAndGlyphs" >1474</text>
<path d="M1822.0 242.95H1834.5M1839.0 242.95H1851.0M1845.0 236.95V248.95" stroke="#d0d0d0" stroke-width="1.3"/>
<rect x="1477.7" y="270.2" width="154.79999999999995" height="31.80000000000001" fill="#2e2e2e" rx="5" stroke="#1e1e1e" stroke-width="1" />
<rect x="1598.5" y="270.7" width="1" height="30.80000000000001" fill="#242424" />
<rect x="1615.5" y="270.7" width="1" height="30.80000000000001" fill="#242424" />
<text x="1485.2" y="291.6" font-size="15" fill="#e6e6e6" textLength="35.5" lengthAdjust="spacingAndGlyphs" >96.00</text>
<path d="M1601.5 286.1H1614M1618.5 286.1H1630.5M1624.5 280.1V292.1" stroke="#d0d0d0" stroke-width="1.3"/>
<defs><pattern id="chk" x="1478" y="791" width="12" height="12" patternUnits="userSpaceOnUse"><rect width="12" height="12" fill="#ffffff"/><rect width="6" height="6" fill="#e8e8e8"/><rect x="6" y="6" width="6" height="6" fill="#e8e8e8"/></pattern></defs>
<rect x="1477" y="790" width="129" height="65" fill="#ffffff" />
<rect x="1478" y="791" width="127" height="63" fill="url(#chk)" />
<ellipse cx="1533" cy="845.3" rx="7" ry="3.2" transform="rotate(27 1533 845.3)" fill="none" stroke="#222" stroke-width="0.9"/><path d="M1530.5 844.5L1535 846.5" stroke="#444" stroke-width="0.8"/>
<path d="M1535 837.3H1537.5M1538.5 837.3H1547" stroke="#555" stroke-width="0.9"/><path d="M1535.3 841H1544.5" stroke="#444" stroke-width="1.1"/><path d="M1545 840.7H1549" stroke="#777" stroke-width="0.7"/>
<defs><linearGradient id="cbg" x1="0" y1="0" x2="0" y2="1"><stop offset="0" stop-color="#454545"/><stop offset="1" stop-color="#2c2c2c"/></linearGradient></defs>
<rect x="1680.5" y="797.5" width="15.5" height="15.5" fill="url(#cbg)" rx="3" stroke="#111111" stroke-width="1" />
<text x="1700" y="811.6" font-size="15" fill="#eaeaea" textLength="138" lengthAdjust="spacingAndGlyphs" >Export Selected Only</text>
<rect x="1676.5" y="818.5" width="51" height="33" fill="#323232" rx="5" stroke="#262626" stroke-width="1" />
<defs><pattern id="chk2" x="1686" y="822.5" width="9" height="9" patternUnits="userSpaceOnUse"><rect width="9" height="9" fill="#c0c0c0"/><rect width="4.5" height="4.5" fill="#a8a8a8"/><rect x="4.5" y="4.5" width="4.5" height="4.5" fill="#a8a8a8"/></pattern></defs>
<clipPath id="bgc"><rect x="1686" y="822.5" width="32" height="23.5" rx="3"/></clipPath>
<g clip-path="url(#bgc)"><rect x="1686" y="822.5" width="16" height="23.5" fill="url(#chk2)"/><rect x="1702" y="822.5" width="16" height="23.5" fill="#ffffff"/></g>
<text x="1735" y="840.3" font-size="15" fill="#eaeaea" textLength="120" lengthAdjust="spacingAndGlyphs" >Background Color</text>
<rect x="1421.5" y="866.5" width="233" height="54" fill="#2e2e2e" rx="6" stroke="#1e1e1e" stroke-width="1" />
<text x="1430" y="900" font-size="15.5" fill="#eaeaea" textLength="193.5" lengthAdjust="spacingAndGlyphs" >s\joyba\Desktop\bitmap.png</text>
<path d="M1631 890V900H1644.5L1646.5 894H1634.5L1632.5 900M1631 890H1636L1637.5 891.5H1643V894" stroke="#eaeaea" stroke-width="1.6" fill="none" stroke-linejoin="round"/>
<rect x="1659.5" y="866.5" width="160" height="54" fill="#2e2e2e" rx="6" stroke="#1e1e1e" stroke-width="1" />
<text x="1670.5" y="900" font-size="15.5" fill="#8a8a8a" textLength="77.5" lengthAdjust="spacingAndGlyphs" >PNG (*.png)</text>
<path d="M1797 891.5L1802 896.5L1807 891.5" stroke="#9a9a9a" stroke-width="1.6" fill="none"/>
<rect x="1824.5" y="866.5" width="35" height="33" fill="#2e2e2e" rx="5" stroke="#1e1e1e" stroke-width="1" />
<rect x="1840.4" y="875.7" width="3.2" height="3.5" fill="#eaeaea" transform="rotate(0 1842 883)"/><rect x="1840.4" y="875.7" width="3.2" height="3.5" fill="#eaeaea" transform="rotate(45 1842 883)"/><rect x="1840.4" y="875.7" width="3.2" height="3.5" fill="#eaeaea" transform="rotate(90 1842 883)"/><rect x="1840.4" y="875.7" width="3.2" height="3.5" fill="#eaeaea" transform="rotate(135 1842 883)"/><rect x="1840.4" y="875.7" width="3.2" height="3.5" fill="#eaeaea" transform="rotate(180 1842 883)"/><rect x="1840.4" y="875.7" width="3.2" height="3.5" fill="#eaeaea" transform="rotate(225 1842 883)"/><rect x="1840.4" y="875.7" width="3.2" height="3.5" fill="#eaeaea" transform="rotate(270 1842 883)"/><rect x="1840.4" y="875.7" width="3.2" height="3.5" fill="#eaeaea" transform="rotate(315 1842 883)"/>
<circle cx="1842" cy="883" r="4.6" fill="none" stroke="#eaeaea" stroke-width="2.6"/>
<rect x="1421.5" y="927.5" width="438" height="33" fill="#2e2e2e" rx="5" stroke="#1e1e1e" stroke-width="1" />
<text x="1619" y="950" font-size="15.5" fill="#8a8a8a" textLength="43" lengthAdjust="spacingAndGlyphs" >Export</text>
<rect x="0" y="972" width="1872" height="11" fill="#333333" />
<rect x="1404" y="966" width="468" height="6" fill="#333333" />
<rect x="0" y="974" width="30" height="9" fill="#ffffff" />
<path d="M0 975L8 983M22 983L30 975" stroke="#c8102e" stroke-width="1.6"/>
<rect x="31" y="974" width="33" height="9" fill="#000000" />
<rect x="65" y="974" width="33" height="9" fill="#808080" />
<rect x="99" y="974" width="33" height="9" fill="#ffffff" />
<rect x="133" y="974" width="21" height="9" fill="#1a1a1a" />
<rect x="155" y="974" width="21" height="9" fill="#333333" />
<rect x="177" y="974" width="21" height="9" fill="#4d4d4d" />
<rect x="199" y="974" width="21" height="9" fill="#666666" />
<rect x="221" y="974" width="21" height="9" fill="#999999" />
<rect x="243" y="974" width="21" height="9" fill="#b3b3b3" />
<rect x="265" y="974" width="21" height="9" fill="#cccccc" />
<rect x="287" y="974" width="21" height="9" fill="#e6e6e6" />
<rect x="309" y="974" width="21" height="9" fill="#ececec" />
<rect x="331" y="974" width="21" height="9" fill="#f2f2f2" />
<rect x="353" y="974" width="21" height="9" fill="#f9f9f9" />
<rect x="375" y="974" width="21" height="9" fill="#800000" />
<rect x="397" y="974" width="21" height="9" fill="#ff0000" />
<rect x="419" y="974" width="21" height="9" fill="#808000" />
<rect x="441" y="974" width="21" height="9" fill="#ffff00" />
<rect x="463" y="974" width="21" height="9" fill="#008000" />
<rect x="485" y="974" width="20" height="9" fill="#00ff00" />
<rect x="506" y="974" width="20" height="9" fill="#008080" />
<rect x="527" y="974" width="20" height="9" fill="#00ffff" />
<rect x="548" y="974" width="20" height="9" fill="#000080" />
<rect x="569" y="974" width="20" height="9" fill="#0000ff" />
<rect x="590" y="974" width="20" height="9" fill="#800080" />
<rect x="611" y="974" width="20" height="9" fill="#ff00ff" />
<rect x="632" y="974" width="20" height="9" fill="#2b0000" />
<rect x="653" y="974" width="20" height="9" fill="#550000" />
<rect x="674" y="974" width="20" height="9" fill="#800000" />
<rect x="695" y="974" width="20" height="9" fill="#aa0000" />
<rect x="716" y="974" width="20" height="9" fill="#d40000" />
<rect x="737" y="974" width="20" height="9" fill="#ff0000" />
<rect x="758" y="974" width="20" height="9" fill="#ff2a2a" />
<rect x="779" y="974" width="20" height="9" fill="#ff5555" />
<rect x="800" y="974" width="20" height="9" fill="#ff8080" />
<rect x="821" y="974" width="20" height="9" fill="#ffaaaa" />
<rect x="842" y="974" width="20" height="9" fill="#ffd5d5" />
<rect x="863" y="974" width="20" height="9" fill="#280b0b" />
<rect x="884" y="974" width="20" height="9" fill="#501616" />
<rect x="905" y="974" width="20" height="9" fill="#782121" />
<rect x="926" y="974" width="20" height="9" fill="#a02c2c" />
<rect x="947" y="974" width="20" height="9" fill="#c83737" />
<rect x="968" y="974" width="20" height="9" fill="#d35f5f" />
<rect x="989" y="974" width="20" height="9" fill="#de8787" />
<rect x="1010" y="974" width="20" height="9" fill="#e9afaf" />
<rect x="1031" y="974" width="20" height="9" fill="#f4d7d7" />
<rect x="1052" y="974" width="20" height="9" fill="#241c1c" />
<rect x="1073" y="974" width="20" height="9" fill="#483737" />
<rect x="1094" y="974" width="20" height="9" fill="#6c5353" />
<rect x="1115" y="974" width="20" height="9" fill="#916f6f" />
<rect x="1136" y="974" width="20" height="9" fill="#ac9393" />
<rect x="1157" y="974" width="20" height="9" fill="#c8b7b7" />
<rect x="1178" y="974" width="20" height="9" fill="#e3dbdb" />
<rect x="1199" y="974" width="20" height="9" fill="#2b1100" />
<rect x="1220" y="974" width="20" height="9" fill="#552200" />
<rect x="1241" y="974" width="20" height="9" fill="#803300" />
<rect x="1262" y="974" width="20" height="9" fill="#aa4400" />
<rect x="1283" y="974" width="20" height="9" fill="#d45500" />
<rect x="1304" y="974" width="20" height="9" fill="#ff6600" />
<rect x="1325" y="974" width="20" height="9" fill="#ff7f2a" />
<rect x="1346" y="974" width="20" height="9" fill="#ff9955" />
<rect x="1367" y="974" width="20" height="9" fill="#ffb380" />
<rect x="1388" y="974" width="20" height="9" fill="#ffccaa" />
<rect x="1409" y="974" width="20" height="9" fill="#ffe6d5" />
<rect x="1430" y="974" width="20" height="9" fill="#28170b" />
<rect x="1451" y="974" width="20" height="9" fill="#502d16" />
<rect x="1472" y="974" width="20" height="9" fill="#784421" />
<rect x="1493" y="974" width="20" height="9" fill="#a05a2c" />
<rect x="1514" y="974" width="20" height="9" fill="#c87137" />
<rect x="1535" y="974" width="20" height="9" fill="#d38d5f" />
<rect x="1556" y="974" width="20" height="9" fill="#deaa87" />
<rect x="1577" y="974" width="20" height="9" fill="#e9c6af" />
<rect x="1598" y="974" width="20" height="9" fill="#f4e3d7" />
<rect x="1619" y="974" width="20" height="9" fill="#241f1c" />
<rect x="1640" y="974" width="20" height="9" fill="#483e37" />
<rect x="1661" y="974" width="20" height="9" fill="#6c5d53" />
<rect x="1682" y="974" width="20" height="9" fill="#917c6f" />
<rect x="1703" y="974" width="20" height="9" fill="#ac9d93" />
<rect x="1724" y="974" width="20" height="9" fill="#c8beb7" />
<rect x="1745" y="974" width="20" height="9" fill="#e3dedb" />
<rect x="1766" y="974" width="20" height="9" fill="#2b2200" />
<rect x="1787" y="974" width="20" height="9" fill="#554400" />
<rect x="1808" y="974" width="20" height="9" fill="#806600" />
<rect x="1829" y="974" width="20" height="9" fill="#aa8800" />
</svg></body></html>
